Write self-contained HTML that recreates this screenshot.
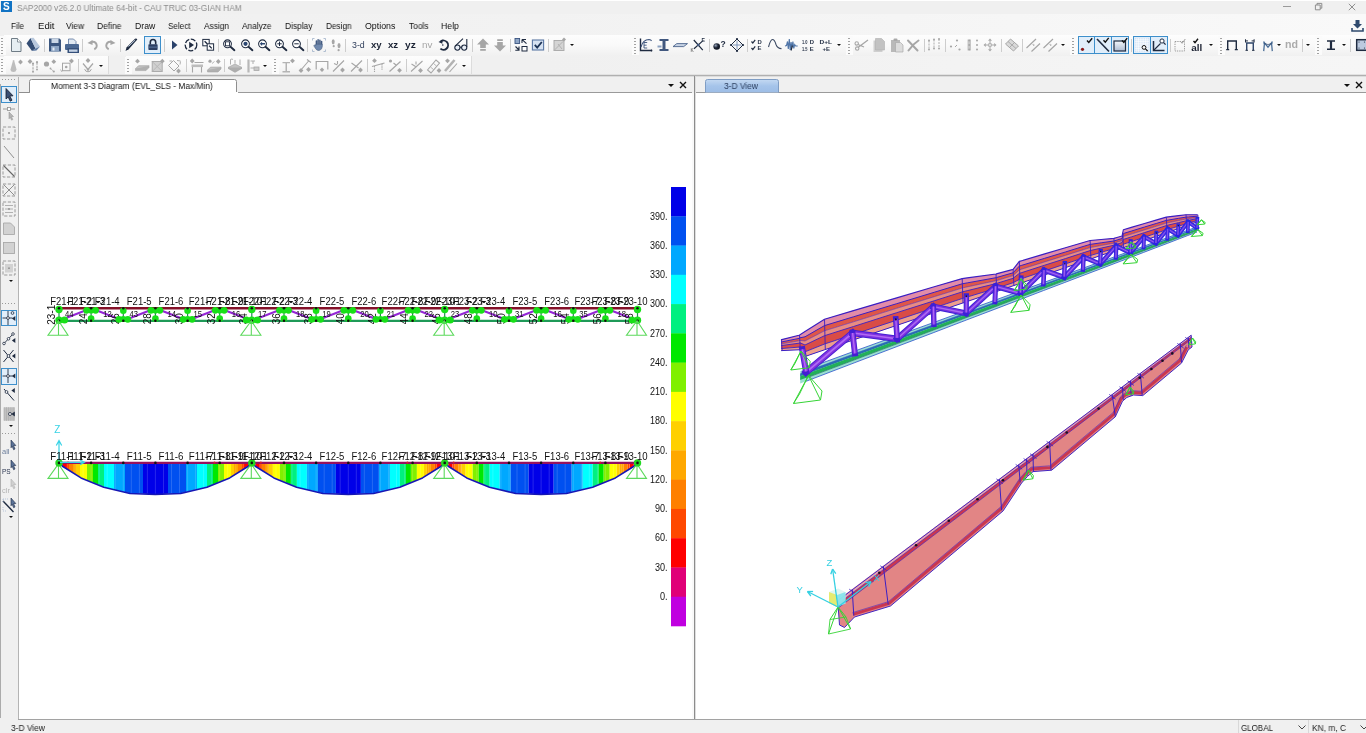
<!DOCTYPE html>
<html><head><meta charset="utf-8"><title>SAP2000</title>
<style>
html,body{margin:0;padding:0;}
body{width:1366px;height:733px;overflow:hidden;background:#f0f0f0;position:relative;font-family:"Liberation Sans",sans-serif;font-size:12px;color:#111;}
.abs{position:absolute;}
.t{position:absolute;white-space:nowrap;transform-origin:0 50%;line-height:14px;will-change:transform;}
.sep{position:absolute;width:1px;background:#cdcdcd;height:13px;}
.grip{position:absolute;width:3px;height:18px;background-image:repeating-linear-gradient(to bottom,#a2a2a2 0,#a2a2a2 1px,transparent 1px,transparent 3px);background-size:2px 3px;background-repeat:repeat-y;background-position:0 0;}
.gripw{position:absolute;width:7px;height:21px;background:#fbfbfb;}
.dd{position:absolute;width:0;height:0;border-left:2.4px solid transparent;border-right:2.4px solid transparent;border-top:2.6px solid #111;}
svg{position:absolute;overflow:visible;will-change:transform;}
.lbl{font-family:"Liberation Sans",sans-serif;font-size:10px;fill:#111;}
.lbls{font-family:"Liberation Sans",sans-serif;font-size:9px;fill:#111;}
</style></head><body>

<div class="abs" style="left:0;top:0;width:1366px;height:1px;background:#fff"></div>
<div class="abs" style="left:0;top:14px;width:1366px;height:21px;background:linear-gradient(to right,#f0f0f0 0%,#f2f2f2 40%,#f9f9f9 100%)"></div>
<div class="abs" style="left:0;top:56px;width:1366px;height:18px;background:linear-gradient(to right,#f0f0f0 0%,#f0f0f0 40%,#f6f6f6 100%)"></div>
<div class="abs" style="left:1px;top:1px;width:11px;height:11px;background:#1173c4"></div>
<div class="t" style="left:3.2px;top:0px;font-size:10px;font-weight:bold;color:#fff;line-height:13px">S</div>
<div class="t" style="left:17px;top:0.5px;font-size:8.7px;color:#8c8c8c;transform:scaleX(0.950);">SAP2000 v26.2.0 Ultimate 64-bit - CAU TRUC 03-GIAN HAM</div>
<div class="abs" style="left:1283px;top:6px;width:7.5px;height:1px;background:#9a9a9a"></div>
<svg style="left:1315px;top:2.5px" width="8" height="8" viewBox="0 0 10 10"><path d="M0.5 2.5h6v6h-6z M2.5 2.5v-2h6v6h-2" fill="none" stroke="#8a8a8a" stroke-width="1.2"/></svg>
<svg style="left:1347.5px;top:2.5px" width="8" height="8" viewBox="0 0 10 10"><path d="M1 1l8 8M9 1l-8 8" fill="none" stroke="#8a8a8a" stroke-width="1.2"/></svg>
<svg style="left:1351px;top:19px" width="13" height="13" viewBox="0 0 13 13"><path d="M4.5 1h4v4h2.5l-4.5 4.5L2 5h2.5z" fill="#2f4a6e"/><path d="M1 9v3h11v-3" fill="none" stroke="#2f4a6e" stroke-width="1.6"/></svg>
<div class="t" style="left:11px;top:18.5px;font-size:8.7px;color:#111;transform:scaleX(0.927);">File</div>
<div class="t" style="left:37.5px;top:18.5px;font-size:8.7px;color:#111;transform:scaleX(1.101);">Edit</div>
<div class="t" style="left:65.5px;top:18.5px;font-size:8.7px;color:#111;transform:scaleX(0.963);">View</div>
<div class="t" style="left:97px;top:18.5px;font-size:8.7px;color:#111;transform:scaleX(0.974);">Define</div>
<div class="t" style="left:134.5px;top:18.5px;font-size:8.7px;color:#111;transform:scaleX(0.985);">Draw</div>
<div class="t" style="left:167.5px;top:18.5px;font-size:8.7px;color:#111;transform:scaleX(0.931);">Select</div>
<div class="t" style="left:203.5px;top:18.5px;font-size:8.7px;color:#111;transform:scaleX(0.957);">Assign</div>
<div class="t" style="left:242px;top:18.5px;font-size:8.7px;color:#111;transform:scaleX(0.953);">Analyze</div>
<div class="t" style="left:284.5px;top:18.5px;font-size:8.7px;color:#111;transform:scaleX(0.964);">Display</div>
<div class="t" style="left:325.5px;top:18.5px;font-size:8.7px;color:#111;transform:scaleX(0.942);">Design</div>
<div class="t" style="left:364.5px;top:18.5px;font-size:8.7px;color:#111;transform:scaleX(1.017);">Options</div>
<div class="t" style="left:408.5px;top:18.5px;font-size:8.7px;color:#111;transform:scaleX(0.960);">Tools</div>
<div class="t" style="left:441px;top:18.5px;font-size:8.7px;color:#111;transform:scaleX(1.006);">Help</div>
<div class="abs" style="left:4px;top:35px;width:1362px;height:21px;background:linear-gradient(to bottom,#fdfdfd 0%,#f9f9f9 50%,#f0f0f0 100%)"></div>
<div class="abs" style="left:4px;top:56px;width:104px;height:19px;background:linear-gradient(to bottom,#fdfdfd 0%,#f9f9f9 50%,#f0f0f0 100%);border-right:1px solid #dcdcdc"></div>
<div class="abs" style="left:126px;top:56px;width:345px;height:19px;background:linear-gradient(to bottom,#fdfdfd 0%,#f9f9f9 50%,#f0f0f0 100%);border-right:1px solid #dcdcdc"></div>
<div class="gripw" style="left:-1px;top:36px;height:19px"></div>
<div class="grip" style="left:1px;top:38px;height:16px"></div>
<div class="gripw" style="left:632px;top:36px;height:19px"></div>
<div class="grip" style="left:634px;top:38px;height:16px"></div>
<div class="gripw" style="left:846px;top:36px;height:19px"></div>
<div class="grip" style="left:848px;top:38px;height:16px"></div>
<div class="gripw" style="left:1070px;top:36px;height:19px"></div>
<div class="grip" style="left:1072px;top:38px;height:16px"></div>
<div class="gripw" style="left:1217.5px;top:36px;height:19px"></div>
<div class="grip" style="left:1219.5px;top:38px;height:16px"></div>
<div class="gripw" style="left:1314.5px;top:36px;height:19px"></div>
<div class="grip" style="left:1316.5px;top:38px;height:16px"></div>
<div class="gripw" style="left:-1px;top:57px;height:19px"></div>
<div class="grip" style="left:1px;top:59px;height:16px"></div>
<div class="gripw" style="left:125px;top:57px;height:19px"></div>
<div class="grip" style="left:127px;top:59px;height:16px"></div>
<div class="gripw" style="left:272px;top:57px;height:19px"></div>
<div class="grip" style="left:274px;top:59px;height:16px"></div>
<div class="abs" style="left:0;top:74px;width:1366px;height:1px;background:#e2e2e2"></div>
<div class="abs" style="left:0;top:75px;width:1366px;height:1px;background:#b0b0b0"></div>
<div class="abs" style="left:0;top:76px;width:1366px;height:1px;background:#dcdcdc"></div>
<div class="abs" style="left:0;top:77px;width:18px;height:642px;background:#f0f0f0"></div>
<div class="abs" style="left:18px;top:77px;width:1px;height:642px;background:#b4b4b4"></div>
<div class="abs" style="left:0;top:84px;width:1px;height:634px;background:#ababab"></div>
<div class="abs" style="left:19px;top:93px;width:673px;height:626px;background:#fff"></div>
<div class="abs" style="left:19px;top:92px;width:673px;height:1px;background:#9a9a9a"></div>
<svg style="left:19px;top:77px" width="230" height="17" viewBox="0 0 230 17"><path d="M0 15.5H10.5V4.5Q10.5 2.5 12.5 2.5H215.5Q217.5 2.5 217.5 4.5V15.5" fill="#fff" stroke="#8e8e8e" stroke-width="1"/><rect x="11" y="15" width="208" height="2" fill="#fff"/></svg>
<div class="t" style="left:51px;top:78.5px;font-size:8.7px;color:#111;transform:scaleX(0.963);">Moment 3-3 Diagram (EVL_SLS - Max/Min)</div>
<div class="dd" style="left:668px;top:84px;border-left-width:3.5px;border-right-width:3.5px;border-top-width:3.5px"></div>
<svg style="left:679px;top:81px" width="8" height="8" viewBox="0 0 8 8"><path d="M1 1l6 6M7 1l-6 6" stroke="#111" stroke-width="1.4" fill="none"/></svg>
<div class="abs" style="left:692px;top:93px;width:2px;height:626px;background:#f9f9f9"></div>
<div class="abs" style="left:694px;top:76px;width:1px;height:643px;background:#8c8c8c"></div>
<div class="abs" style="left:695px;top:76px;width:1px;height:643px;background:#dedede"></div>
<div class="abs" style="left:696px;top:93px;width:670px;height:626px;background:#fff"></div>
<div class="abs" style="left:696px;top:92px;width:670px;height:1px;background:#9a9a9a"></div>
<svg style="left:697px;top:77px" width="100" height="17" viewBox="0 0 100 17"><defs><linearGradient id="tg" x1="0" y1="0" x2="0" y2="1"><stop offset="0" stop-color="#c4d9f2"/><stop offset="0.5" stop-color="#a5c4ea"/><stop offset="1" stop-color="#9dbde6"/></linearGradient></defs><path d="M8.5 15.5V4.5Q8.5 2.5 10.5 2.5H79.5Q81.5 2.5 81.5 4.5V15.5" fill="url(#tg)" stroke="#7f9dc4" stroke-width="1"/></svg>
<div class="t" style="left:724px;top:78.5px;font-size:8.7px;color:#2c3e5e;transform:scaleX(0.968);">3-D View</div>
<div class="dd" style="left:1344px;top:84px;border-left-width:3.5px;border-right-width:3.5px;border-top-width:3.5px"></div>
<svg style="left:1355px;top:81px" width="8" height="8" viewBox="0 0 8 8"><path d="M1 1l6 6M7 1l-6 6" stroke="#111" stroke-width="1.4" fill="none"/></svg>
<div class="abs" style="left:0;top:719px;width:1366px;height:1px;background:#f0f0f0"></div><div class="abs" style="left:18px;top:719px;width:1348px;height:1px;background:#a2a2a2"></div>
<div class="abs" style="left:0;top:720px;width:1366px;height:13px;background:#f0f0f0"></div>
<div class="t" style="left:11px;top:720.8px;font-size:8.7px;color:#222;transform:scaleX(0.968);">3-D View</div>
<div class="abs" style="left:1238px;top:720px;width:1px;height:13px;background:#d8d8d8"></div>
<div class="abs" style="left:1308px;top:720px;width:1px;height:13px;background:#d8d8d8"></div>
<div class="t" style="left:1241px;top:720.8px;font-size:8.7px;color:#222;transform:scaleX(0.919);">GLOBAL</div>
<div class="t" style="left:1312px;top:720.8px;font-size:8.7px;color:#222;transform:scaleX(0.964);">KN, m, C</div>
<svg style="left:1298px;top:725px" width="8" height="5" viewBox="0 0 8 5"><path d="M0.5 0.5l3.5 3.5l3.5-3.5" stroke="#444" fill="none"/></svg>
<svg style="left:1360px;top:725px" width="8" height="5" viewBox="0 0 8 5"><path d="M0.5 0.5l3.5 3.5l3.5-3.5" stroke="#444" fill="none"/></svg>
<svg style="left:8px;top:37px" width="16" height="16" viewBox="-8 -8 16 16"><path d="M-4.5 -6.5h6l3.5 3.5v9.5h-9.5z" fill="#e6eef2" stroke="#6f7c86" stroke-width="1"/><path d="M1.5 -6.5v3.5h3.5" fill="#fff" stroke="#6f7c86" stroke-width="0.8"/></svg>
<svg style="left:24.5px;top:37px" width="16" height="16" viewBox="-8 -8 16 16"><path d="M-6.5 -1.5L-2.5 -7L2.5 3.5L-1 6z" fill="#344d73"/><path d="M-2.5 -7L0.5 -7.2L7 1.5L2.5 3.5z" fill="#b7c7dc"/><path d="M2.5 3.5L7 1.5L3.5 5.5L-1 6z" fill="#5e7ba3"/></svg>
<div class="sep" style="left:43.5px;top:38.5px;height:13px"></div>
<svg style="left:47px;top:37px" width="16" height="16" viewBox="-8 -8 16 16"><path d="M-6 -6.5h10.5l1.5 1.5v11.5h-12z" fill="#3b567f"/><rect x="-3.5" y="-6.5" width="7" height="4.5" fill="#c9d6e6"/><rect x="-4" y="1" width="8" height="5.5" fill="#8da5c4"/><rect x="-2.5" y="2.5" width="2" height="3" fill="#e6edf5"/></svg>
<svg style="left:63.5px;top:37.5px" width="16" height="16" viewBox="-8 -8 16 16"><path d="M-3.5 -7h5l2.5 2.5v3h-7.5z" fill="#dfe8f2" stroke="#5a759c" stroke-width="0.8"/><rect x="-7" y="-2" width="14" height="6" rx="1" fill="#4a6893"/><rect x="-4.5" y="2" width="11.5" height="5" fill="#35507a"/><rect x="-3" y="3.5" width="8.5" height="2.3" fill="#c5d3e5"/></svg>
<div class="sep" style="left:81.5px;top:38.5px;height:13px"></div>
<svg style="left:84.5px;top:37px" width="16" height="16" viewBox="-8 -8 16 16"><g transform="scale(0.85)"><path d="M-2 -3.5A4.3 4.3 0 1 1 1.5 5" fill="none" stroke="#a6a6a6" stroke-width="2.4"/><path d="M-6.5 -2.5L-0.5 -6v6z" fill="#a6a6a6"/></g></svg>
<svg style="left:101.5px;top:37px" width="16" height="16" viewBox="-8 -8 16 16"><g transform="scale(0.85)"><path d="M2 -3.5A4.3 4.3 0 1 0 -1.5 5" fill="none" stroke="#a6a6a6" stroke-width="2.4"/><path d="M6.5 -2.5L0.5 -6v6z" fill="#a6a6a6"/></g></svg>
<div class="sep" style="left:120px;top:38.5px;height:13px"></div>
<svg style="left:123px;top:37px" width="16" height="16" viewBox="-8 -8 16 16"><path d="M-5.5 6L-4.5 2.5L4 -6.2Q5.5 -7 6.3 -5.5L-2.3 4.2z" fill="#1f2b40"/><path d="M-2.5 1.5L4.2 -5" stroke="#b9c8dc" stroke-width="1"/></svg>
<div class="abs" style="left:144px;top:36px;width:17px;height:17.5px;box-sizing:border-box;border:1px solid #3d8fcb;background:#e1eefa"></div>
<svg style="left:144.5px;top:37px" width="16" height="16" viewBox="-8 -8 16 16"><path d="M-2.7 -0.5v-2.3a2.7 2.7 0 0 1 5.4 0v2.3" fill="none" stroke="#1f2b40" stroke-width="1.6"/><rect x="-4.6" y="-0.8" width="9.2" height="5.8" rx="0.7" fill="#2b3f63"/><rect x="-4.6" y="1.6" width="9.2" height="1" fill="#5b769f"/></svg>
<div class="sep" style="left:163.5px;top:38.5px;height:13px"></div>
<svg style="left:165.5px;top:37px" width="16" height="16" viewBox="-8 -8 16 16"><path d="M-2 -4.5L3.5 0L-2 4.5z" fill="#2a426b"/></svg>
<svg style="left:183px;top:37px" width="16" height="16" viewBox="-8 -8 16 16"><circle cx="0" cy="0" r="5.8" fill="none" stroke="#1f2b40" stroke-width="1.3" stroke-dasharray="5 1.6"/><path d="M-1.8 -3.2L3 0L-1.8 3.2z" fill="#1f2b40"/></svg>
<svg style="left:200px;top:37px" width="16" height="16" viewBox="-8 -8 16 16"><rect x="-5.2" y="-5.6" width="6.4" height="6.4" fill="#fff" stroke="#1f2b40" stroke-width="1"/><rect x="-0.8" y="-1.2" width="6.4" height="6.4" fill="#fff" stroke="#1f2b40" stroke-width="1"/><path d="M-3.4 -3.8l2.6 2.6M1.2 0.8l2.6 2.6" stroke="#1f2b40" stroke-width="1.3"/></svg>
<div class="sep" style="left:217.5px;top:38.5px;height:13px"></div>
<svg style="left:221px;top:37px" width="16" height="16" viewBox="-8 -8 16 16"><circle cx="-1.5" cy="-1.2" r="3.9" fill="#fff" stroke="#1f2b40" stroke-width="1.05"/><path d="M1.5 1.8L5.4 5.2" stroke="#1f2b40" stroke-width="1.9" stroke-linecap="round"/><rect x="-3.5" y="-3.2" width="4" height="4" fill="#fff" stroke="#1f2b40" stroke-width="0.9"/></svg>
<svg style="left:238.5px;top:37px" width="16" height="16" viewBox="-8 -8 16 16"><circle cx="-1.5" cy="-1.2" r="3.9" fill="#fff" stroke="#1f2b40" stroke-width="1.05"/><path d="M1.5 1.8L5.4 5.2" stroke="#1f2b40" stroke-width="1.9" stroke-linecap="round"/><circle cx="-1.5" cy="-1.2" r="2.1" fill="#2b4670"/></svg>
<svg style="left:255.5px;top:37px" width="16" height="16" viewBox="-8 -8 16 16"><circle cx="-1.5" cy="-1.2" r="3.9" fill="#fff" stroke="#1f2b40" stroke-width="1.05"/><path d="M1.5 1.8L5.4 5.2" stroke="#1f2b40" stroke-width="1.9" stroke-linecap="round"/><path d="M-4.2 -1.2l2.3 -2.1v1.4h2.9v1.4h-2.9v1.4z" fill="#2b4670"/></svg>
<svg style="left:272.5px;top:37px" width="16" height="16" viewBox="-8 -8 16 16"><circle cx="-1.5" cy="-1.2" r="3.9" fill="#fff" stroke="#1f2b40" stroke-width="1.05"/><path d="M1.5 1.8L5.4 5.2" stroke="#1f2b40" stroke-width="1.9" stroke-linecap="round"/><path d="M-3.7 -1.2h4.4M-1.5 -3.4v4.4" stroke="#1f2b40" stroke-width="1"/></svg>
<svg style="left:290px;top:37px" width="16" height="16" viewBox="-8 -8 16 16"><circle cx="-1.5" cy="-1.2" r="3.9" fill="#fff" stroke="#1f2b40" stroke-width="1.05"/><path d="M1.5 1.8L5.4 5.2" stroke="#1f2b40" stroke-width="1.9" stroke-linecap="round"/><path d="M-3.7 -1.2h4.4" stroke="#1f2b40" stroke-width="1"/></svg>
<div class="sep" style="left:307px;top:38.5px;height:13px"></div>
<svg style="left:310.5px;top:37px" width="16" height="16" viewBox="-8 -8 16 16"><path d="M-6.5 -4.5v-2h2M4.5 -6.5h2v2M6.5 4.5v2h-2M-4.5 6.5h-2v-2" fill="none" stroke="#9eb0c8" stroke-width="0.8"/><path d="M-2.6 0V-4M-0.9 -0.5V-5.2M0.9 -0.5V-4.8M2.6 0V-3.4" stroke="#435b82" stroke-width="1.5" stroke-linecap="round"/><path d="M-3.3 -0.8h6.6v2.6q-0.4 3 -3 3.6h-1.4q-1.6 -0.4 -2.6 -2.2l-1.6 -2.6q0.6 -1 1.6 -0.2l0.4 0.6z" fill="#7089ae" stroke="#3f5679" stroke-width="0.5"/></svg>
<svg style="left:328px;top:37px" width="16" height="16" viewBox="-8 -8 16 16"><ellipse cx="-2.8" cy="-3.2" rx="1.5" ry="2.6" fill="#a6a6a6"/><circle cx="-2.3" cy="1.2" r="1.1" fill="#a6a6a6"/><ellipse cx="3" cy="0.6" rx="1.5" ry="2.6" fill="#a6a6a6"/><circle cx="2.6" cy="5.2" r="1.1" fill="#a6a6a6"/></svg>
<div class="sep" style="left:345px;top:38.5px;height:13px"></div>
<div class="t" style="left:351.85px;top:37.7px;font-size:8.8px;color:#2f3e5b;transform:scaleX(0.967);">3-d</div>
<div class="t" style="left:370.65px;top:37.5px;font-size:9.6px;color:#1a2233;transform:scaleX(0.965);font-weight:bold;">xy</div>
<div class="t" style="left:387.9px;top:37.5px;font-size:9.6px;color:#1a2233;transform:scaleX(1.006);font-weight:bold;">xz</div>
<div class="t" style="left:404.6px;top:37.5px;font-size:9.6px;color:#1a2233;transform:scaleX(1.065);font-weight:bold;">yz</div>
<div class="t" style="left:421.8px;top:37.5px;font-size:9.4px;color:#a6a6a6;transform:scaleX(1.048);">nv</div>
<svg style="left:435.5px;top:37px" width="16" height="16" viewBox="-8 -8 16 16"><path d="M-3.2 -3.6A4.6 4.6 0 1 1 -3.6 3.6" fill="none" stroke="#1f2b40" stroke-width="1.9"/><path d="M-5.5 -3l4.2 -2.4l-0.4 4.2z" fill="#1f2b40"/><circle cx="-1.2" cy="0" r="0.8" fill="#1f2b40"/></svg>
<svg style="left:452.5px;top:37px" width="16" height="16" viewBox="-8 -8 16 16"><circle cx="-3.6" cy="2.6" r="2.6" fill="#e8eef6" stroke="#1f2b40" stroke-width="1.1"/><circle cx="3.2" cy="2.6" r="2.6" fill="#e8eef6" stroke="#1f2b40" stroke-width="1.1"/><path d="M-1 2.2h1.6M-5.6 0.8L2 -6.3M5.8 2V-6" fill="none" stroke="#1f2b40" stroke-width="1.1"/></svg>
<div class="sep" style="left:471.5px;top:38.5px;height:13px"></div>
<svg style="left:474.5px;top:37px" width="16" height="16" viewBox="-8 -8 16 16"><path d="M0 -6.5L6 -0.5H2.8V3h-5.6v-3.5H-6z" fill="#a6a6a6"/><rect x="-2.8" y="4" width="5.6" height="1.8" fill="#a6a6a6"/></svg>
<svg style="left:491.5px;top:37px" width="16" height="16" viewBox="-8 -8 16 16"><path d="M0 6.5L6 0.5H2.8V-3h-5.6v3.5H-6z" fill="#a6a6a6"/><rect x="-2.8" y="-5.8" width="5.6" height="1.8" fill="#a6a6a6"/></svg>
<div class="sep" style="left:509.5px;top:38.5px;height:13px"></div>
<svg style="left:512.5px;top:37px" width="16" height="16" viewBox="-8 -8 16 16"><rect x="-6" y="-6.5" width="4.6" height="5" fill="#8fa6c6" stroke="#3a5480" stroke-width="0.9"/><path d="M1 -5.5h4M1 -5.5v3.5M1.2 -5.3l4.3 4" stroke="#1f2b40" stroke-width="1.1" fill="none"/><rect x="1" y="1.5" width="5" height="4.5" fill="#fff" stroke="#1f2b40" stroke-width="1"/><path d="M-5.5 1.5l3.5 3.5M-2 1.5v3.7h-3.7" stroke="#1f2b40" stroke-width="1.1" fill="none"/></svg>
<svg style="left:529.5px;top:37px" width="16" height="16" viewBox="-8 -8 16 16"><rect x="-5.6" y="-5" width="11.2" height="10" fill="#d6e2f2" stroke="#5b78a4" stroke-width="1.1"/><path d="M-3.2 -0.2L-0.8 2.6L3.8 -3" fill="none" stroke="#1d3457" stroke-width="1.8"/></svg>
<div class="sep" style="left:547.5px;top:38.5px;height:13px"></div>
<svg style="left:551.5px;top:37px" width="16" height="16" viewBox="-8 -8 16 16"><rect x="-6" y="-4.5" width="10" height="10" fill="#d4d4d4" stroke="#a6a6a6" stroke-width="0.9"/><path d="M-6 5.5L3 -3.5M-2 -1l4 5" stroke="#b2b2b2" stroke-width="1"/><path d="M4 -7.5l2 2l-2 2l-2 -2z" fill="#a6a6a6"/></svg>
<div class="dd" style="left:570.1px;top:44.2px;border-top-color:#111"></div>
<svg style="left:638px;top:37px" width="16" height="16" viewBox="-8 -8 16 16"><path d="M-5.5 -6.5V5.5H6" fill="none" stroke="#1f2b40" stroke-width="1.4"/><path d="M-5 2Q-3 -5.5 3 -5.5Q5 -5.3 5.5 -4" fill="none" stroke="#3b527a" stroke-width="1.1"/><path d="M-2 -2.5v5.5M-2 -2.5h3.2M-2 0.2h2.6M-2 3h3.2" stroke="#3b527a" stroke-width="0.9" fill="none"/><circle cx="5.5" cy="5.5" r="0.9" fill="#1f2b40"/></svg>
<svg style="left:655.5px;top:37px" width="16" height="16" viewBox="-8 -8 16 16"><path d="M-4.5 -6h9v2h-3v8h3v2h-9v-2h3v-8h-3z" fill="#41587f"/><path d="M-6.5 1.5h4" stroke="#8aa0c0" stroke-width="2"/></svg>
<svg style="left:672px;top:37px" width="16" height="16" viewBox="-8 -8 16 16"><path d="M-7 1.6L-3.2 -1.4H7.5L3.7 1.6z" fill="#c7d3e4" stroke="#4c648c" stroke-width="0.9"/></svg>
<svg style="left:689.5px;top:37px" width="16" height="16" viewBox="-8 -8 16 16"><path d="M-4.2 -5L4.8 5.2M4.2 -3.6L-4 3.8" stroke="#1f2b40" stroke-width="1.2"/><circle cx="0.3" cy="0" r="1.3" fill="#41587f"/><text x="3.6" y="-2.6" font-family="Liberation Sans,sans-serif" font-size="5.2" font-weight="bold" fill="#1f2b40">E</text><text x="-7.6" y="7" font-family="Liberation Sans,sans-serif" font-size="4.8" fill="#444">K</text></svg>
<div class="sep" style="left:708.5px;top:38.5px;height:13px"></div>
<svg style="left:711px;top:37px" width="16" height="16" viewBox="-8 -8 16 16"><defs><radialGradient id="bg1" cx="0.35" cy="0.35" r="0.7"><stop offset="0" stop-color="#9aa7bd"/><stop offset="0.5" stop-color="#1c2434"/><stop offset="1" stop-color="#0d121d"/></radialGradient></defs><circle cx="-2.3" cy="1.5" r="3.3" fill="url(#bg1)"/><text x="1.4" y="1.8" font-family="Liberation Sans,sans-serif" font-size="8.5" font-weight="bold" fill="#1f2b40">?</text></svg>
<svg style="left:728.5px;top:37px" width="16" height="16" viewBox="-8 -8 16 16"><path d="M0 -6L6 0L0 6L-6 0z" fill="none" stroke="#1f2b40" stroke-width="1"/><path d="M0 -4.5v9M-4.5 0h9" stroke="#6f8bb3" stroke-width="0.9"/><circle cx="0" cy="-6" r="1.1" fill="#1f2b40"/><circle cx="6" cy="0" r="1.1" fill="#1f2b40"/><circle cx="0" cy="6" r="1.1" fill="#1f2b40"/><circle cx="-6" cy="0" r="1.1" fill="#1f2b40"/></svg>
<div class="sep" style="left:747px;top:38.5px;height:13px"></div>
<svg style="left:749px;top:37px" width="16" height="16" viewBox="-8 -8 16 16"><path d="M-5.5 -3.5l1.3 1.5l2.4 -3.2M-5.5 3l1.3 1.5l2.4 -3.2" fill="none" stroke="#1f2b40" stroke-width="1.2"/><text x="0.5" y="-1.2" font-family="Liberation Sans,sans-serif" font-weight="bold" font-size="5.9" fill="#1f2b40">D</text><text x="0.5" y="5.4" font-family="Liberation Sans,sans-serif" font-weight="bold" font-size="5.9" fill="#1f2b40">E</text></svg>
<svg style="left:766.5px;top:37px" width="16" height="16" viewBox="-8 -8 16 16"><path d="M-6.5 2Q-4.5 -5.5 -2.5 -5.5Q-0.5 -5.5 1 -0.5Q2.5 3.6 6.5 3.6" fill="none" stroke="#3c4a63" stroke-width="1.1"/></svg>
<svg style="left:784px;top:37px" width="16" height="16" viewBox="-8 -8 16 16"><path d="M-7 1l1.5 -0.5l1 -4l0.8 7.5l1 -10l0.9 11l0.9 -8l0.8 5.5l1 -6l0.9 7l0.9 -4l1 1.5h2" fill="none" stroke="#4f75a8" stroke-width="1.1"/><path d="M-1 5.5l1.4 -5" stroke="#1f2b40" stroke-width="1.2"/></svg>
<svg style="left:800.5px;top:37px" width="16" height="16" viewBox="-8 -8 16 16"><text x="-7" y="-1" font-family="Liberation Sans,sans-serif" font-weight="bold" font-size="5.9" fill="#1f2b40" textLength="5.5" lengthAdjust="spacingAndGlyphs">1.0</text><text x="0.8" y="-1" font-family="Liberation Sans,sans-serif" font-weight="bold" font-size="5.9" fill="#1f2b40">D</text><text x="-7" y="5.6" font-family="Liberation Sans,sans-serif" font-weight="bold" font-size="5.9" fill="#1f2b40" textLength="5.5" lengthAdjust="spacingAndGlyphs">1.5</text><text x="0.8" y="5.6" font-family="Liberation Sans,sans-serif" font-weight="bold" font-size="5.9" fill="#1f2b40">E</text></svg>
<svg style="left:818px;top:37px" width="16" height="16" viewBox="-8 -8 16 16"><text x="-6.5" y="-1" font-family="Liberation Sans,sans-serif" font-weight="bold" font-size="5.9" fill="#1f2b40" textLength="12.5" lengthAdjust="spacingAndGlyphs">D+L</text><text x="-3.5" y="5.6" font-family="Liberation Sans,sans-serif" font-weight="bold" font-size="5.9" fill="#1f2b40" textLength="7.5" lengthAdjust="spacingAndGlyphs">+E</text></svg>
<div class="dd" style="left:837.1px;top:44.2px;border-top-color:#111"></div>
<svg style="left:853px;top:37px" width="16" height="16" viewBox="-8 -8 16 16"><path d="M-3 2.5L7 -5M-3 -0.5L3 2" stroke="#a6a6a6" stroke-width="1.3"/><circle cx="-4.3" cy="-1.6" r="1.7" fill="none" stroke="#a6a6a6" stroke-width="1.1"/><circle cx="-3.8" cy="3.6" r="1.7" fill="none" stroke="#a6a6a6" stroke-width="1.1"/></svg>
<svg style="left:870.5px;top:37px" width="16" height="16" viewBox="-8 -8 16 16"><path d="M-5.5 -4.5h6l3 3v8.5h-9z" fill="#cfcfcf"/><path d="M-3.5 -6.5h6l3 3v8.5h-9z" fill="#c2c2c2" stroke="#b0b0b0" stroke-width="0.6"/></svg>
<svg style="left:888.5px;top:37px" width="16" height="16" viewBox="-8 -8 16 16"><path d="M-6 -5h9v12h-9z" fill="#b9b9b9"/><rect x="-3.5" y="-6.5" width="4" height="2.5" rx="1" fill="#a9a9a9"/><path d="M-1.5 -2.5h5l2.5 2.5v7h-7.5z" fill="#dcdcdc" stroke="#aaa" stroke-width="0.7"/></svg>
<svg style="left:905px;top:37px" width="16" height="16" viewBox="-8 -8 16 16"><path d="M-5 -4.5L4.5 5.5M5.5 -4.5Q0 -1 -4.5 5.5" stroke="#a6a6a6" stroke-width="2" fill="none" stroke-linecap="round"/></svg>
<div class="sep" style="left:923.5px;top:38.5px;height:13px"></div>
<svg style="left:926px;top:37px" width="16" height="16" viewBox="-8 -8 16 16"><path d="M-5 -4.5v9M0 -5.5v9M5 -6v9.5" stroke="#a6a6a6" stroke-width="0.9" stroke-dasharray="2 1"/><circle cx="-5" cy="-4.5" r="1" fill="#a6a6a6"/><circle cx="-5" cy="4.5" r="1" fill="#a6a6a6"/><circle cx="0" cy="-5.5" r="1" fill="#a6a6a6"/><circle cx="0" cy="3.5" r="1" fill="#a6a6a6"/><circle cx="5" cy="-6" r="1" fill="#a6a6a6"/><circle cx="5" cy="3.5" r="1" fill="#a6a6a6"/></svg>
<div class="sep" style="left:945px;top:38.5px;height:13px"></div>
<svg style="left:948px;top:37px" width="16" height="16" viewBox="-8 -8 16 16"><circle cx="-5" cy="1.5" r="1.1" fill="#a6a6a6"/><circle cx="1" cy="-4.5" r="1.1" fill="#a6a6a6"/><circle cx="3.5" cy="4.5" r="1.1" fill="#a6a6a6"/><path d="M-1 2l2 -2" stroke="#a6a6a6" stroke-width="1"/></svg>
<svg style="left:965px;top:37px" width="16" height="16" viewBox="-8 -8 16 16"><rect x="-5.5" y="-5.5" width="3.5" height="11" fill="#c6c6c6"/><circle cx="-3.8" cy="-4.5" r="1" fill="#a6a6a6"/><circle cx="-3.8" cy="0" r="1" fill="#a6a6a6"/><circle cx="-3.8" cy="4.5" r="1" fill="#a6a6a6"/><circle cx="4" cy="-4.5" r="1" fill="#a6a6a6"/><circle cx="4" cy="0" r="1" fill="#a6a6a6"/><circle cx="4" cy="4.5" r="1" fill="#a6a6a6"/></svg>
<svg style="left:982px;top:37px" width="16" height="16" viewBox="-8 -8 16 16"><path d="M0 -6.5l2 2.3h-4zM0 6.5l2 -2.3h-4zM-6.5 0l2.3 -2v4zM6.5 0l-2.3 -2v4z" fill="#a6a6a6"/><path d="M0 -4.5v9M-4.5 0h9" stroke="#a6a6a6" stroke-width="1"/><rect x="-1.3" y="-1.3" width="2.6" height="2.6" fill="#e0e0e0" stroke="#a6a6a6" stroke-width="0.7"/></svg>
<div class="sep" style="left:1001px;top:38.5px;height:13px"></div>
<svg style="left:1003.5px;top:37px" width="16" height="16" viewBox="-8 -8 16 16"><path d="M-1.5 -6L6.5 1L1.5 6L-6.5 -1z" fill="#d9d9d9" stroke="#a6a6a6" stroke-width="1"/><path d="M-4 -3.5L4 3.5M2.5 -2.5L-2.5 2.5" stroke="#a6a6a6" stroke-width="0.9"/></svg>
<div class="sep" style="left:1022px;top:38.5px;height:13px"></div>
<svg style="left:1025px;top:37px" width="16" height="16" viewBox="-8 -8 16 16"><path d="M-6.5 3L3 -6M-1.5 6.5L7 -1.5" stroke="#a6a6a6" stroke-width="1.2"/><path d="M-0.5 -0.5l1.5 1.2l-0.3 -1.8" fill="none" stroke="#a6a6a6" stroke-width="0.8"/></svg>
<svg style="left:1042px;top:37px" width="16" height="16" viewBox="-8 -8 16 16"><path d="M-6.5 3L3 -6M-1.5 6.5L7 -1.5" stroke="#a6a6a6" stroke-width="1.2"/><path d="M-0.5 -0.5l1.5 1.2l-0.3 -1.8" fill="none" stroke="#a6a6a6" stroke-width="0.8"/></svg>
<div class="dd" style="left:1061.1px;top:44.2px;border-top-color:#111"></div>
<div class="abs" style="left:1077.5px;top:36px;width:17.5px;height:18px;box-sizing:border-box;border:1px solid #3d8fcb;background:#e1eefa"></div>
<div class="abs" style="left:1094px;top:36px;width:18px;height:18px;box-sizing:border-box;border:1px solid #3d8fcb;background:#e1eefa"></div>
<div class="abs" style="left:1111px;top:36px;width:18px;height:18px;box-sizing:border-box;border:1px solid #3d8fcb;background:#e1eefa"></div>
<svg style="left:1078px;top:37px" width="16" height="16" viewBox="-8 -8 16 16"><circle cx="-3.5" cy="4.3" r="1.6" fill="#8b1a1a"/><path d="M1 -4.5l1.8 2l3.4 -4.3" fill="none" stroke="#111" stroke-width="1.4"/></svg>
<svg style="left:1095px;top:37px" width="16" height="16" viewBox="-8 -8 16 16"><path d="M-6 -6L6 6.5" stroke="#1f2b40" stroke-width="1.6"/><path d="M0.5 -4.8l1.8 2l3.4 -4.3" fill="none" stroke="#111" stroke-width="1.4"/></svg>
<svg style="left:1112px;top:37px" width="16" height="16" viewBox="-8 -8 16 16"><defs><linearGradient id="sq1" x1="0" y1="0" x2="0" y2="1"><stop offset="0" stop-color="#f4f7fb"/><stop offset="1" stop-color="#aebcd2"/></linearGradient></defs><rect x="-6" y="-4" width="11.5" height="10" fill="url(#sq1)" stroke="#1f2b40" stroke-width="1.2"/><path d="M2 -4.6l1.8 2l3.4 -4.3" fill="none" stroke="#111" stroke-width="1.4"/></svg>
<div class="sep" style="left:1131px;top:38.5px;height:13px"></div>
<div class="abs" style="left:1133px;top:36px;width:18px;height:18px;box-sizing:border-box;border:1px solid #3d8fcb;background:#e1eefa"></div>
<div class="abs" style="left:1150px;top:36px;width:18px;height:18px;box-sizing:border-box;border:1px solid #3d8fcb;background:#e1eefa"></div>
<svg style="left:1133.5px;top:37px" width="16" height="16" viewBox="-8 -8 16 16"><rect x="-7" y="-7" width="14" height="14" fill="#d3e3f6"/><path d="M-5.2 -7v14M-7 -5.2h14M-3.5 -7v14M-7 -3.5h14M-1.7 -7v14M-7 -1.7h14M0 -7v14M-7 0h14M1.7 -7v14M-7 1.7h14M3.5 -7v14M-7 3.5h14M5.2 -7v14M-7 5.2h14" stroke="#fff" stroke-width="0.6"/><circle cx="2" cy="2.4" r="1.9" fill="#fff" stroke="#111" stroke-width="1"/><path d="M3.5 3.9l2.2 2.2" stroke="#111" stroke-width="1.3"/></svg>
<svg style="left:1150.5px;top:37px" width="16" height="16" viewBox="-8 -8 16 16"><path d="M-5.5 -4V5.5H5.5" fill="none" stroke="#1f2b40" stroke-width="1.5"/><path d="M-5 5L1.5 -1.5" stroke="#1f2b40" stroke-width="1.1"/><circle cx="3" cy="-4" r="2.1" fill="#fff" stroke="#1f2b40" stroke-width="1"/><path d="M4.6 -2.4l2 2" stroke="#1f2b40" stroke-width="1.3"/></svg>
<div class="sep" style="left:1170px;top:38.5px;height:13px"></div>
<svg style="left:1172px;top:37px" width="16" height="16" viewBox="-8 -8 16 16"><rect x="-5" y="-3.5" width="9.5" height="9.5" fill="none" stroke="#9a9a9a" stroke-width="1" stroke-dasharray="1.3 1"/><path d="M0.5 -3.5l1.6 1.8l3.2 -4.3" fill="none" stroke="#9a9a9a" stroke-width="1"/></svg>
<svg style="left:1188.5px;top:37px" width="16" height="16" viewBox="-8 -8 16 16"><path d="M-3.5 -4l1.5 1.6l3 -3.8" fill="none" stroke="#111" stroke-width="1.4"/><text x="-5.8" y="6.2" font-family="Liberation Sans,sans-serif" font-weight="bold" font-size="9" fill="#1a2030" textLength="11" lengthAdjust="spacingAndGlyphs">all</text></svg>
<div class="dd" style="left:1208.6px;top:44.2px;border-top-color:#111"></div>
<svg style="left:1224px;top:37px" width="16" height="16" viewBox="-8 -8 16 16"><path d="M-4.3 4.5V-4H4.3V4.5" fill="none" stroke="#1f2b40" stroke-width="1.4"/><path d="M-5.8 4.6h3M2.8 4.6h3" stroke="#1f2b40" stroke-width="1.2"/></svg>
<svg style="left:1242px;top:36.5px" width="16" height="16" viewBox="-8 -8 16 16"><g transform="scale(0.82)"><path d="M-4 6.5V-2.5H4V6.5" fill="none" stroke="#2d4468" stroke-width="1.7"/><path d="M-5.5 -7v4M-5.5 -5h3M5 -7v4M5 -5h-3M-5.5 6.5h3M2.5 6.5h3" stroke="#1f2b40" stroke-width="1.2"/></g></svg>
<svg style="left:1260px;top:37.5px" width="16" height="16" viewBox="-8 -8 16 16"><g transform="scale(0.78)"><path d="M-5.5 6.5L-4.5 -4L0 1.5L4.5 -4L5.5 6.5" fill="none" stroke="#466a94" stroke-width="1.6"/><path d="M-5.5 -6v3M5.5 -6v3" stroke="#466a94" stroke-width="1"/><path d="M-4.5 -3.2Q0 -0.5 4.5 -3.2" fill="none" stroke="#2d4468" stroke-width="0.9"/></g></svg>
<div class="dd" style="left:1276.6px;top:44.2px;border-top-color:#111"></div>
<div class="t" style="left:1284.5px;top:38px;font-size:10px;color:#ababab;transform:scaleX(1.064);font-weight:bold;">nd</div>
<div class="sep" style="left:1301.5px;top:38.5px;height:13px"></div>
<div class="dd" style="left:1305.6px;top:44.2px;border-top-color:#111"></div>
<svg style="left:1323px;top:37px" width="16" height="16" viewBox="-8 -8 16 16"><path d="M-4 -4.8h8v1.6h-2.9v6.6h2.9v1.6h-8v-1.6h2.9v-6.6h-2.9z" fill="#1f2b40"/></svg>
<div class="dd" style="left:1341.6px;top:44.2px;border-top-color:#111"></div>
<div class="sep" style="left:1350px;top:38.5px;height:13px"></div>
<svg style="left:1353px;top:37px" width="16" height="16" viewBox="-8 -8 16 16"><rect x="-4.3" y="-5.3" width="11" height="10.6" fill="#bccadf" stroke="#1f2b40" stroke-width="1.5"/><circle cx="-2" cy="-3" r="0.6" fill="#1f2b40"/><circle cx="-2" cy="3" r="0.6" fill="#1f2b40"/><circle cx="3.5" cy="3" r="0.6" fill="#1f2b40"/><circle cx="3.5" cy="-3" r="0.6" fill="#1f2b40"/></svg>
<svg style="left:9px;top:57.5px" width="16" height="16" viewBox="-8 -8 16 16"><path d="M-4 -5.5Q-3.4 -6.5 -2.8 -5.5L-0.5 3.5Q-1 6 -3.4 6Q-6.3 6 -6.5 3.5z" fill="#bdbdbd"/><path d="M3.5 -6.4l2.4 2.4l-2.4 2.4l-2.4 -2.4z" fill="#a6a6a6"/></svg>
<svg style="left:25.5px;top:57.5px" width="16" height="16" viewBox="-8 -8 16 16"><path d="M-4 -6.9l2.4 2.4l-2.4 2.4l-2.4 -2.4z" fill="#a6a6a6"/><path d="M-1 -2v8M3 -3.5v7" stroke="#a6a6a6" stroke-width="1.1" stroke-dasharray="2.2 1"/><circle cx="-1" cy="-2.5" r="1.1" fill="#a6a6a6"/><circle cx="3" cy="-3.8" r="1.1" fill="#a6a6a6"/><circle cx="-1" cy="5.8" r="1" fill="#a6a6a6"/><circle cx="3" cy="3.5" r="1" fill="#a6a6a6"/></svg>
<svg style="left:41.5px;top:57.5px" width="16" height="16" viewBox="-8 -8 16 16"><circle cx="-3.5" cy="-2" r="2.6" fill="#a6a6a6"/><path d="M3.8 -6.7l2.4 2.4l-2.4 2.4l-2.4 -2.4z" fill="#a6a6a6"/><circle cx="0.5" cy="2.5" r="0.9" fill="#a6a6a6"/><circle cx="3.8" cy="5.5" r="1.1" fill="#a6a6a6"/><path d="M0.5 2.5l3 2.8" stroke="#a6a6a6" stroke-width="0.7"/></svg>
<svg style="left:59px;top:57.5px" width="16" height="16" viewBox="-8 -8 16 16"><rect x="-4.5" y="-2.8" width="7.5" height="7.5" fill="none" stroke="#a6a6a6" stroke-width="1"/><circle cx="-0.8" cy="1" r="1.3" fill="#a6a6a6"/><path d="M4.5 -7.4l2.4 2.4l-2.4 2.4l-2.4 -2.4z" fill="#a6a6a6"/><path d="M-6.5 3.5l1.5 2.5M3.5 -4.5l-1 -1.5" stroke="#a6a6a6" stroke-width="0.8"/></svg>
<div class="sep" style="left:78px;top:59px;height:13px"></div>
<svg style="left:80px;top:57.5px" width="16" height="16" viewBox="-8 -8 16 16"><path d="M0 -7.9l2.4 2.4l-2.4 2.4l-2.4 -2.4z" fill="#a6a6a6"/><path d="M-5 -2.5L0 3.5L5 -2.5" fill="none" stroke="#a6a6a6" stroke-width="1.2"/><path d="M-3.3 3.2A3.4 3.4 0 0 0 3.3 3.2" fill="none" stroke="#a6a6a6" stroke-width="1"/><circle cx="0" cy="3.5" r="1.2" fill="#a6a6a6"/></svg>
<div class="dd" style="left:99.1px;top:64.7px;border-top-color:#111"></div>
<svg style="left:133.5px;top:57.5px" width="16" height="16" viewBox="-8 -8 16 16"><path d="M-4.5 -7.2l2.4 2.4l-2.4 2.4l-2.4 -2.4z" fill="#a6a6a6"/><path d="M-6.5 2.8L-3.5 -0.2H7L4 2.8z" fill="#c4c4c4" stroke="#a6a6a6" stroke-width="0.8"/><path d="M-6.5 2.8v1.8H4L7 1.6v-1.8" fill="#b0b0b0" stroke="#a6a6a6" stroke-width="0.6"/></svg>
<svg style="left:150px;top:57.5px" width="16" height="16" viewBox="-8 -8 16 16"><rect x="-5.8" y="-4.5" width="10" height="10" fill="#d0d0d0" stroke="#a6a6a6" stroke-width="0.9"/><path d="M-5.8 -4.5l10 10M4.2 -4.5l-10 10" stroke="#b4b4b4" stroke-width="0.9"/><path d="M4.3 -7.2l2.4 2.4l-2.4 2.4l-2.4 -2.4z" fill="#a6a6a6"/></svg>
<svg style="left:167px;top:57.5px" width="16" height="16" viewBox="-8 -8 16 16"><path d="M-1.5 -5.5L4 0L-1 5L-6.5 -0.5z" fill="none" stroke="#a6a6a6" stroke-width="1"/><path d="M-5.5 -5l2.5 0M2 -5.5l3.5 0.5M5.5 -4.5l-0.5 3" stroke="#a6a6a6" stroke-width="0.9"/><path d="M3.5 2.6l2.4 2.4l-2.4 2.4l-2.4 -2.4z" fill="#a6a6a6"/></svg>
<div class="sep" style="left:185.5px;top:59px;height:13px"></div>
<svg style="left:188.5px;top:57.5px" width="16" height="16" viewBox="-8 -8 16 16"><path d="M-4.8 -7.4l2.4 2.4l-2.4 2.4l-2.4 -2.4z" fill="#a6a6a6"/><path d="M-5.5 -1.5h11.5v2.6h-11.5z" fill="#bcbcbc"/><path d="M-4.5 1v5.5M4.5 1v5.5M-2.5 -3.5h9" stroke="#a6a6a6" stroke-width="1.1"/></svg>
<svg style="left:206px;top:57.5px" width="16" height="16" viewBox="-8 -8 16 16"><circle cx="-4" cy="-4.8" r="1.6" fill="#a6a6a6"/><path d="M4.3 -6.9l2.4 2.4l-2.4 2.4l-2.4 -2.4z" fill="#a6a6a6"/><path d="M-2 -2.5l2.5 -2" stroke="#a6a6a6" stroke-width="0.8"/><path d="M-6.5 4.2L-3.5 1.2H7L4 4.2z" fill="#c4c4c4" stroke="#a6a6a6" stroke-width="0.8"/><path d="M-6.5 4.2v1.8H4L7 3v-1.8" fill="#b0b0b0" stroke="#a6a6a6" stroke-width="0.6"/></svg>
<div class="sep" style="left:223.5px;top:59px;height:13px"></div>
<svg style="left:226.5px;top:57.5px" width="16" height="16" viewBox="-8 -8 16 16"><path d="M-7 1.5L0 -2L7 1.5L0 5.5z" fill="#c2c2c2" stroke="#a6a6a6" stroke-width="0.7"/><path d="M-7 1.5v1.3L0 6.8L7 2.8V1.5" fill="#adadad"/><path d="M-4.5 -6.5v5M0 -6v3.5M5 -6.5v5.5M-4.5 -6.5q1.5 -1 2.5 0" stroke="#a6a6a6" stroke-width="0.9" fill="none"/></svg>
<svg style="left:244.5px;top:57.5px" width="16" height="16" viewBox="-8 -8 16 16"><path d="M-4.5 -6.5v13" stroke="#b8b8b8" stroke-width="2.2"/><path d="M-2.5 -5h4.5M-2.5 2h3.5M0 -5v3" stroke="#a6a6a6" stroke-width="0.9"/><rect x="1" y="1" width="5" height="3.4" fill="#c8c8c8" stroke="#a6a6a6" stroke-width="0.8"/></svg>
<div class="dd" style="left:263.1px;top:64.7px;border-top-color:#111"></div>
<svg style="left:279.5px;top:57.5px" width="16" height="16" viewBox="-8 -8 16 16"><path d="M-5.5 -4h7.5v1.3h-3v7.8h3v1.3h-7.5v-1.3h3v-7.8h-3z" fill="#b4b4b4"/><path d="M4.5 -7.6l2.4 2.4l-2.4 2.4l-2.4 -2.4z" fill="#a6a6a6"/></svg>
<svg style="left:297px;top:57.5px" width="16" height="16" viewBox="-8 -8 16 16"><path d="M-4.5 4.5L4 -5.5M2 -6.5l4 3" stroke="#a6a6a6" stroke-width="1.1"/><path d="M-4 2.1l2.4 2.4l-2.4 2.4l-2.4 -2.4z" fill="#a6a6a6"/><path d="M3.5 1.1l2.4 2.4l-2.4 2.4l-2.4 -2.4z" fill="#a6a6a6"/></svg>
<svg style="left:314px;top:57.5px" width="16" height="16" viewBox="-8 -8 16 16"><path d="M-5.8 3.5V-4.5H5.8V3.5" fill="none" stroke="#a6a6a6" stroke-width="1.2"/><path d="M0 1.6l2.2 2.2l-2.2 2.2l-2.2 -2.2z" fill="#a6a6a6"/></svg>
<svg style="left:331px;top:57.5px" width="16" height="16" viewBox="-8 -8 16 16"><path d="M-6 5.5L5 -5.5M-5 -2.5l3.5 1.5M-1.5 -5l0 3" stroke="#a6a6a6" stroke-width="1.1"/><path d="M3.5 1.6l2.4 2.4l-2.4 2.4l-2.4 -2.4z" fill="#a6a6a6"/></svg>
<svg style="left:348.5px;top:57.5px" width="16" height="16" viewBox="-8 -8 16 16"><path d="M-6 5.5L5 -5.5M-5.5 -3l7 5" stroke="#a6a6a6" stroke-width="1.1"/><path d="M3.5 1.6l2.4 2.4l-2.4 2.4l-2.4 -2.4z" fill="#a6a6a6"/></svg>
<div class="sep" style="left:366.5px;top:59px;height:13px"></div>
<svg style="left:370px;top:57.5px" width="16" height="16" viewBox="-8 -8 16 16"><path d="M-3.5 -7.7l2.4 2.4l-2.4 2.4l-2.4 -2.4z" fill="#a6a6a6"/><path d="M-6 0.5L6.5 -3" stroke="#a6a6a6" stroke-width="1.2"/><path d="M-3.5 0v6M4 -2.2v6" stroke="#a6a6a6" stroke-width="1.1" stroke-dasharray="1.6 0.8"/></svg>
<svg style="left:387px;top:57.5px" width="16" height="16" viewBox="-8 -8 16 16"><circle cx="-4.5" cy="-5" r="1.6" fill="#a6a6a6"/><path d="M-5.5 5.5L5.5 -4.5M-1.5 -3l2.5 2" stroke="#a6a6a6" stroke-width="1.2"/><path d="M4.5 1.9l2.4 2.4l-2.4 2.4l-2.4 -2.4z" fill="#a6a6a6"/></svg>
<div class="sep" style="left:405.5px;top:59px;height:13px"></div>
<svg style="left:408.5px;top:57.5px" width="16" height="16" viewBox="-8 -8 16 16"><path d="M-6 5.5L5.5 -5M-5.5 -2l4 2.5M-1 -4.5v3" stroke="#a6a6a6" stroke-width="1.1"/><path d="M3.5 2.1l2.4 2.4l-2.4 2.4l-2.4 -2.4z" fill="#a6a6a6"/></svg>
<svg style="left:426px;top:57.5px" width="16" height="16" viewBox="-8 -8 16 16"><path d="M-6.5 4L2 -6L5.5 -3L-3 7z" fill="none" stroke="#a6a6a6" stroke-width="1.1"/><path d="M-3.5 1l3 2.5M-0.5 -2.5l3 2.5" stroke="#a6a6a6" stroke-width="0.8"/><path d="M5 2.1l2.4 2.4l-2.4 2.4l-2.4 -2.4z" fill="#a6a6a6"/></svg>
<svg style="left:443px;top:57.5px" width="16" height="16" viewBox="-8 -8 16 16"><path d="M-3.5 -7.6l2.4 2.4l-2.4 2.4l-2.4 -2.4z" fill="#a6a6a6"/><path d="M-6 5L3.5 -6" stroke="#b3b3b3" stroke-width="2.6"/><path d="M-1.5 6L6 -2.5" stroke="#a6a6a6" stroke-width="1.1"/></svg>
<div class="dd" style="left:462.1px;top:64.7px;border-top-color:#111"></div>
<div class="abs" style="left:2px;top:79px;width:14px;height:1px;background-image:repeating-linear-gradient(to right,#9a9a9a 0,#9a9a9a 1px,transparent 1px,transparent 3px)"></div>
<div class="abs" style="left:0.5px;top:85.5px;width:16px;height:17.5px;box-sizing:border-box;border:1px solid #3d8fcb;background:#e1eefa"></div>
<svg style="left:0.5px;top:86.5px" width="16" height="16" viewBox="-8 -8 16 16"><path d="M-3 -6.5L4 0.8L0.8 1L3 5.2L1.2 6.2L-0.8 2L-3 4z" fill="#3b4f73" stroke="#141c2c" stroke-width="0.8"/></svg>
<svg style="left:0.5px;top:105.5px" width="16" height="16" viewBox="-8 -8 16 16"><path d="M-6 -5h12" stroke="#8f8f8f" stroke-width="0.9"/><rect x="-1.5" y="-6.5" width="3" height="3" fill="#fff" stroke="#8f8f8f" stroke-width="0.8"/><path d="M0 -2L4.5 2.5L2.4 2.7L3.8 5.5L2.6 6.2L1.3 3.4L0 4.8z" fill="#b5b5b5" stroke="#8f8f8f" stroke-width="0.5"/></svg>
<svg style="left:0.5px;top:125.4px" width="16" height="16" viewBox="-8 -8 16 16"><rect x="-6" y="-6" width="12" height="12" fill="none" stroke="#8f8f8f" stroke-width="0.9" stroke-dasharray="3.2 1.6"/><circle cx="0" cy="0" r="0.9" fill="#8f8f8f"/></svg>
<svg style="left:0.5px;top:144px" width="16" height="16" viewBox="-8 -8 16 16"><path d="M-5 -6L5 6" stroke="#8f8f8f" stroke-width="1"/></svg>
<svg style="left:0.5px;top:163px" width="16" height="16" viewBox="-8 -8 16 16"><rect x="-6" y="-6" width="12" height="12" fill="none" stroke="#8f8f8f" stroke-width="0.9" stroke-dasharray="3.2 1.6"/><path d="M-5.5 -5.5L5.5 5.5" stroke="#666" stroke-width="1.1"/></svg>
<svg style="left:0.5px;top:182.4px" width="16" height="16" viewBox="-8 -8 16 16"><rect x="-6" y="-6" width="12" height="12" fill="none" stroke="#8f8f8f" stroke-width="0.9" stroke-dasharray="3.2 1.6"/><path d="M-5.5 -5.5L5.5 5.5M5.5 -5.5L-5.5 5.5" stroke="#8f8f8f" stroke-width="1"/></svg>
<svg style="left:0.5px;top:201.4px" width="16" height="16" viewBox="-8 -8 16 16"><rect x="-6" y="-7" width="12" height="14" fill="none" stroke="#8f8f8f" stroke-width="0.9" stroke-dasharray="3.2 1.6"/><path d="M-4 -3.5h8M-4 0h8M-4 3.5h8" stroke="#b0b0b0" stroke-width="1.2"/><circle cx="0" cy="0" r="0.9" fill="#8f8f8f"/></svg>
<svg style="left:0.5px;top:221px" width="16" height="16" viewBox="-8 -8 16 16"><path d="M-5.5 -6H1.5L5.5 -2V5.5H-5.5z" fill="#d2d2d2" stroke="#a8a8a8" stroke-width="0.9"/></svg>
<svg style="left:0.5px;top:240px" width="16" height="16" viewBox="-8 -8 16 16"><rect x="-5.5" y="-5.5" width="11" height="11" fill="#d2d2d2" stroke="#a8a8a8" stroke-width="0.9"/></svg>
<svg style="left:0.5px;top:259.8px" width="16" height="16" viewBox="-8 -8 16 16"><rect x="-6" y="-7" width="12" height="14" fill="none" stroke="#8f8f8f" stroke-width="0.9" stroke-dasharray="3.2 1.6"/><rect x="-4" y="-4" width="8" height="8.5" fill="#d2d2d2"/><circle cx="0" cy="0.2" r="0.9" fill="#8f8f8f"/></svg>
<div class="dd" style="left:9.1px;top:279.7px;border-top-color:#111"></div>
<div class="abs" style="left:2px;top:303px;width:14px;height:1px;background-image:repeating-linear-gradient(to right,#9a9a9a 0,#9a9a9a 1px,transparent 1px,transparent 3px)"></div>
<div class="abs" style="left:0.5px;top:309.5px;width:16px;height:16.5px;box-sizing:border-box;border:1px solid #3d8fcb;background:#e1eefa"></div>
<svg style="left:0.5px;top:309.5px" width="16" height="16" viewBox="-8 -8 16 16"><path d="M-1 -7v14M-6.5 0h10" stroke="#1f2b40" stroke-width="0.9"/><circle cx="-1" cy="0" r="1.4" fill="#fff" stroke="#1f2b40" stroke-width="0.8"/><circle cx="3.5" cy="-5" r="1.4" fill="none" stroke="#1f2b40" stroke-width="0.8"/><path d="M2.9 0.5l3.4 -2.6v5.2z" fill="#1f2b40"/></svg>
<svg style="left:0.5px;top:329.5px" width="16" height="16" viewBox="-8 -8 16 16"><path d="M-5 5.5L4 -4" stroke="#1f2b40" stroke-width="0.9"/><circle cx="-5" cy="5.5" r="1.3" fill="#fff" stroke="#1f2b40" stroke-width="0.8"/><circle cx="-0.5" cy="0.8" r="1.3" fill="#fff" stroke="#1f2b40" stroke-width="0.8"/><circle cx="4" cy="-4" r="1.3" fill="#fff" stroke="#1f2b40" stroke-width="0.8"/><path d="M2.9 2.5l3.4 -2.6v5.2z" fill="#1f2b40"/></svg>
<svg style="left:0.5px;top:347.6px" width="16" height="16" viewBox="-8 -8 16 16"><path d="M-5.5 -6L4.5 6M4.5 -6L-5.5 6" stroke="#1f2b40" stroke-width="1"/><circle cx="-0.5" cy="0" r="1.4" fill="#fff" stroke="#1f2b40" stroke-width="0.8"/><path d="M2.9 0l3.4 -2.6v5.2z" fill="#1f2b40"/></svg>
<div class="abs" style="left:0.5px;top:367.5px;width:16px;height:17px;box-sizing:border-box;border:1px solid #3d8fcb;background:#e1eefa"></div>
<svg style="left:0.5px;top:368px" width="16" height="16" viewBox="-8 -8 16 16"><path d="M-1 -7v14M-6.5 0h10" stroke="#1f2b40" stroke-width="0.9"/><circle cx="-1" cy="0" r="1.4" fill="#fff" stroke="#1f2b40" stroke-width="0.8"/><path d="M2.9 0l3.4 -2.6v5.2z" fill="#1f2b40"/></svg>
<svg style="left:0.5px;top:386px" width="16" height="16" viewBox="-8 -8 16 16"><path d="M-5 -5L5 6.5" stroke="#1f2b40" stroke-width="1"/><circle cx="-2.5" cy="-2" r="1.4" fill="#fff" stroke="#1f2b40" stroke-width="0.8"/><path d="M2.4 -3.5l3.4 -2.6v5.2z" fill="#1f2b40"/></svg>
<svg style="left:0.5px;top:406px" width="16" height="16" viewBox="-8 -8 16 16"><rect x="-5.5" y="-7" width="11.5" height="14" fill="#d6d6d6"/><path d="M-4.2 -7v14M-2.4 -7v14M-0.6 -7v14M1.2 -7v14M3 -7v14M4.8 -7v14M-5.5 -5h11.5M-5.5 -3h11.5M-5.5 -1h11.5M-5.5 1h11.5M-5.5 3h11.5M-5.5 5h11.5" stroke="#9a9a9a" stroke-width="0.5"/><circle cx="1" cy="0" r="1.5" fill="#fff" stroke="#1f2b40" stroke-width="0.8"/><path d="M2.4 0l3.4 -2.6v5.2z" fill="#1f2b40"/></svg>
<div class="dd" style="left:9.1px;top:425.2px;border-top-color:#111"></div>
<div class="abs" style="left:2px;top:432.5px;width:14px;height:1px;background-image:repeating-linear-gradient(to right,#9a9a9a 0,#9a9a9a 1px,transparent 1px,transparent 3px)"></div>
<svg style="left:0.5px;top:438.7px" width="16" height="16" viewBox="-8 -8 16 16"><path d="M2 -7L6.8 -1.5L4.6 -1.5L6 2L4.6 2.7L3.2 -0.8L2 0.8z" fill="#5c7499" stroke="#1c2a44" stroke-width="0.6"/><text x="-7" y="6.5" font-family="Liberation Sans,sans-serif" font-size="7.5" fill="#6d7f9c">all</text></svg>
<svg style="left:0.5px;top:459px" width="16" height="16" viewBox="-8 -8 16 16"><path d="M2 -7L6.8 -1.5L4.6 -1.5L6 2L4.6 2.7L3.2 -0.8L2 0.8z" fill="#5c7499" stroke="#1c2a44" stroke-width="0.6"/><text x="-7" y="6.5" font-family="Liberation Sans,sans-serif" font-size="6.5" fill="#2a3550">PS</text></svg>
<svg style="left:0.5px;top:478px" width="16" height="16" viewBox="-8 -8 16 16"><path d="M2 -7L6.8 -1.5L4.6 -1.5L6 2L4.6 2.7L3.2 -0.8L2 0.8z" fill="#d0d0d0" stroke="#b0b0b0" stroke-width="0.6"/><text x="-7" y="6.5" font-family="Liberation Sans,sans-serif" font-size="7.5" fill="#b4b4b4">clr</text></svg>
<svg style="left:0.5px;top:496.7px" width="16" height="16" viewBox="-8 -8 16 16"><path d="M2 -7L6.8 -1.5L4.6 -1.5L6 2L4.6 2.7L3.2 -0.8L2 0.8z" fill="#5c7499" stroke="#1c2a44" stroke-width="0.6"/><path d="M-6 -4L4.5 7" stroke="#1f2b40" stroke-width="1.4"/><path d="M-6 -6h6M-6 -6v3M-6 2v4h3" stroke="#9fb3cf" stroke-width="0.7" stroke-dasharray="1 1" fill="none"/></svg>
<div class="dd" style="left:9.1px;top:516.2px;border-top-color:#111"></div>
<svg style="left:0;top:0" width="1366" height="733" viewBox="0 0 1366 733">
<rect x="671" y="187.00" width="15" height="29.57" fill="#0000e8"/>
<rect x="671" y="216.27" width="15" height="29.57" fill="#0050f0"/>
<rect x="671" y="245.53" width="15" height="29.57" fill="#00a8ff"/>
<rect x="671" y="274.80" width="15" height="29.57" fill="#00ffff"/>
<rect x="671" y="304.07" width="15" height="29.57" fill="#00f080"/>
<rect x="671" y="333.33" width="15" height="29.57" fill="#00e800"/>
<rect x="671" y="362.60" width="15" height="29.57" fill="#80f000"/>
<rect x="671" y="391.87" width="15" height="29.57" fill="#ffff00"/>
<rect x="671" y="421.13" width="15" height="29.57" fill="#ffd000"/>
<rect x="671" y="450.40" width="15" height="29.57" fill="#ffa800"/>
<rect x="671" y="479.67" width="15" height="29.57" fill="#ff8000"/>
<rect x="671" y="508.93" width="15" height="29.57" fill="#ff4800"/>
<rect x="671" y="538.20" width="15" height="29.57" fill="#ff0000"/>
<rect x="671" y="567.47" width="15" height="29.57" fill="#e00078"/>
<rect x="671" y="596.73" width="15" height="29.57" fill="#c000e0"/>
<text x="650.0" y="219.5" class="lbl" textLength="17.5" lengthAdjust="spacingAndGlyphs" fill="#222">390.</text>
<text x="650.0" y="248.7" class="lbl" textLength="17.5" lengthAdjust="spacingAndGlyphs" fill="#222">360.</text>
<text x="650.0" y="278.0" class="lbl" textLength="17.5" lengthAdjust="spacingAndGlyphs" fill="#222">330.</text>
<text x="650.0" y="307.3" class="lbl" textLength="17.5" lengthAdjust="spacingAndGlyphs" fill="#222">300.</text>
<text x="650.0" y="336.5" class="lbl" textLength="17.5" lengthAdjust="spacingAndGlyphs" fill="#222">270.</text>
<text x="650.0" y="365.8" class="lbl" textLength="17.5" lengthAdjust="spacingAndGlyphs" fill="#222">240.</text>
<text x="650.0" y="395.1" class="lbl" textLength="17.5" lengthAdjust="spacingAndGlyphs" fill="#222">210.</text>
<text x="650.0" y="424.3" class="lbl" textLength="17.5" lengthAdjust="spacingAndGlyphs" fill="#222">180.</text>
<text x="650.0" y="453.6" class="lbl" textLength="17.5" lengthAdjust="spacingAndGlyphs" fill="#222">150.</text>
<text x="650.0" y="482.9" class="lbl" textLength="17.5" lengthAdjust="spacingAndGlyphs" fill="#222">120.</text>
<text x="654.9" y="512.1" class="lbl" textLength="12.6" lengthAdjust="spacingAndGlyphs" fill="#222">90.</text>
<text x="654.9" y="541.4" class="lbl" textLength="12.6" lengthAdjust="spacingAndGlyphs" fill="#222">60.</text>
<text x="654.9" y="570.7" class="lbl" textLength="12.6" lengthAdjust="spacingAndGlyphs" fill="#222">30.</text>
<text x="659.9" y="599.9" class="lbl" textLength="7.6" lengthAdjust="spacingAndGlyphs" fill="#222">0.</text>
<line x1="59.0" y1="320.8" x2="91.1" y2="308.3" stroke="#9426d6" stroke-width="2"/>
<line x1="91.1" y1="308.3" x2="123.3" y2="320.8" stroke="#9426d6" stroke-width="2"/>
<line x1="123.3" y1="320.8" x2="155.4" y2="308.3" stroke="#9426d6" stroke-width="2"/>
<line x1="155.4" y1="308.3" x2="187.6" y2="320.8" stroke="#9426d6" stroke-width="2"/>
<line x1="187.6" y1="320.8" x2="219.7" y2="308.3" stroke="#9426d6" stroke-width="2"/>
<line x1="219.7" y1="308.3" x2="251.8" y2="320.8" stroke="#9426d6" stroke-width="2"/>
<line x1="251.8" y1="320.8" x2="284.0" y2="308.3" stroke="#9426d6" stroke-width="2"/>
<line x1="284.0" y1="308.3" x2="316.1" y2="320.8" stroke="#9426d6" stroke-width="2"/>
<line x1="316.1" y1="320.8" x2="348.3" y2="308.3" stroke="#9426d6" stroke-width="2"/>
<line x1="348.3" y1="308.3" x2="380.4" y2="320.8" stroke="#9426d6" stroke-width="2"/>
<line x1="380.4" y1="320.8" x2="412.6" y2="308.3" stroke="#9426d6" stroke-width="2"/>
<line x1="412.6" y1="308.3" x2="444.7" y2="320.8" stroke="#9426d6" stroke-width="2"/>
<line x1="444.7" y1="320.8" x2="476.8" y2="308.3" stroke="#9426d6" stroke-width="2"/>
<line x1="476.8" y1="308.3" x2="509.0" y2="320.8" stroke="#9426d6" stroke-width="2"/>
<line x1="509.0" y1="320.8" x2="541.1" y2="308.3" stroke="#9426d6" stroke-width="2"/>
<line x1="541.1" y1="308.3" x2="573.3" y2="320.8" stroke="#9426d6" stroke-width="2"/>
<line x1="573.3" y1="320.8" x2="605.4" y2="308.3" stroke="#9426d6" stroke-width="2"/>
<line x1="605.4" y1="308.3" x2="637.5" y2="320.8" stroke="#9426d6" stroke-width="2"/>
<line x1="59.0" y1="308.3" x2="59.0" y2="320.8" stroke="#1f8a50" stroke-width="1.2"/>
<line x1="91.1" y1="308.3" x2="91.1" y2="320.8" stroke="#1f8a50" stroke-width="1.2"/>
<line x1="123.3" y1="308.3" x2="123.3" y2="320.8" stroke="#1f8a50" stroke-width="1.2"/>
<line x1="155.4" y1="308.3" x2="155.4" y2="320.8" stroke="#1f8a50" stroke-width="1.2"/>
<line x1="187.6" y1="308.3" x2="187.6" y2="320.8" stroke="#1f8a50" stroke-width="1.2"/>
<line x1="219.7" y1="308.3" x2="219.7" y2="320.8" stroke="#1f8a50" stroke-width="1.2"/>
<line x1="251.8" y1="308.3" x2="251.8" y2="320.8" stroke="#1f8a50" stroke-width="1.2"/>
<line x1="284.0" y1="308.3" x2="284.0" y2="320.8" stroke="#1f8a50" stroke-width="1.2"/>
<line x1="316.1" y1="308.3" x2="316.1" y2="320.8" stroke="#1f8a50" stroke-width="1.2"/>
<line x1="348.3" y1="308.3" x2="348.3" y2="320.8" stroke="#1f8a50" stroke-width="1.2"/>
<line x1="380.4" y1="308.3" x2="380.4" y2="320.8" stroke="#1f8a50" stroke-width="1.2"/>
<line x1="412.6" y1="308.3" x2="412.6" y2="320.8" stroke="#1f8a50" stroke-width="1.2"/>
<line x1="444.7" y1="308.3" x2="444.7" y2="320.8" stroke="#1f8a50" stroke-width="1.2"/>
<line x1="476.8" y1="308.3" x2="476.8" y2="320.8" stroke="#1f8a50" stroke-width="1.2"/>
<line x1="509.0" y1="308.3" x2="509.0" y2="320.8" stroke="#1f8a50" stroke-width="1.2"/>
<line x1="541.1" y1="308.3" x2="541.1" y2="320.8" stroke="#1f8a50" stroke-width="1.2"/>
<line x1="573.3" y1="308.3" x2="573.3" y2="320.8" stroke="#1f8a50" stroke-width="1.2"/>
<line x1="605.4" y1="308.3" x2="605.4" y2="320.8" stroke="#1f8a50" stroke-width="1.2"/>
<line x1="637.5" y1="308.3" x2="637.5" y2="320.8" stroke="#1f8a50" stroke-width="1.2"/>
<line x1="59.0" y1="308.3" x2="637.5" y2="308.3" stroke="#841129" stroke-width="2.4"/>
<line x1="59.0" y1="320.8" x2="637.5" y2="320.8" stroke="#1f9a58" stroke-width="2.2"/>
<text x="65.1" y="316.5" class="lbls" textLength="8.5" lengthAdjust="spacingAndGlyphs" >44</text>
<text x="103.2" y="316.5" class="lbls" textLength="8.5" lengthAdjust="spacingAndGlyphs" >12</text>
<text x="129.4" y="316.5" class="lbls" textLength="8.5" lengthAdjust="spacingAndGlyphs" >43</text>
<text x="167.5" y="316.5" class="lbls" textLength="8.5" lengthAdjust="spacingAndGlyphs" >14</text>
<text x="193.6" y="316.5" class="lbls" textLength="8.5" lengthAdjust="spacingAndGlyphs" >15</text>
<text x="231.8" y="316.5" class="lbls" textLength="8.5" lengthAdjust="spacingAndGlyphs" >16</text>
<text x="257.9" y="316.5" class="lbls" textLength="8.5" lengthAdjust="spacingAndGlyphs" >17</text>
<text x="296.1" y="316.5" class="lbls" textLength="8.5" lengthAdjust="spacingAndGlyphs" >18</text>
<text x="322.2" y="316.5" class="lbls" textLength="8.5" lengthAdjust="spacingAndGlyphs" >19</text>
<text x="360.3" y="316.5" class="lbls" textLength="8.5" lengthAdjust="spacingAndGlyphs" >20</text>
<text x="386.5" y="316.5" class="lbls" textLength="8.5" lengthAdjust="spacingAndGlyphs" >21</text>
<text x="424.6" y="316.5" class="lbls" textLength="8.5" lengthAdjust="spacingAndGlyphs" >22</text>
<text x="450.8" y="316.5" class="lbls" textLength="8.5" lengthAdjust="spacingAndGlyphs" >23</text>
<text x="488.9" y="316.5" class="lbls" textLength="8.5" lengthAdjust="spacingAndGlyphs" >10</text>
<text x="515.1" y="316.5" class="lbls" textLength="8.5" lengthAdjust="spacingAndGlyphs" >31</text>
<text x="553.2" y="316.5" class="lbls" textLength="8.5" lengthAdjust="spacingAndGlyphs" >16</text>
<text x="579.3" y="316.5" class="lbls" textLength="8.5" lengthAdjust="spacingAndGlyphs" >35</text>
<text x="617.5" y="316.5" class="lbls" textLength="8.5" lengthAdjust="spacingAndGlyphs" >18</text>
<text transform="translate(54.5 324.8) rotate(-90)" class="lbl">23-1</text>
<text transform="translate(86.6 324.3) rotate(-90)" class="lbl">24</text>
<text transform="translate(118.8 324.3) rotate(-90)" class="lbl">26</text>
<text transform="translate(150.9 324.3) rotate(-90)" class="lbl">28</text>
<text transform="translate(183.1 324.3) rotate(-90)" class="lbl">30</text>
<text transform="translate(215.2 324.3) rotate(-90)" class="lbl">32</text>
<text transform="translate(247.3 324.3) rotate(-90)" class="lbl">34</text>
<text transform="translate(279.5 324.3) rotate(-90)" class="lbl">36</text>
<text transform="translate(311.6 324.3) rotate(-90)" class="lbl">38</text>
<text transform="translate(343.8 324.3) rotate(-90)" class="lbl">40</text>
<text transform="translate(375.9 324.3) rotate(-90)" class="lbl">42</text>
<text transform="translate(408.1 324.3) rotate(-90)" class="lbl">44</text>
<text transform="translate(440.2 324.3) rotate(-90)" class="lbl">46</text>
<text transform="translate(472.3 324.3) rotate(-90)" class="lbl">48</text>
<text transform="translate(504.5 324.3) rotate(-90)" class="lbl">50</text>
<text transform="translate(536.6 324.3) rotate(-90)" class="lbl">52</text>
<text transform="translate(568.8 324.3) rotate(-90)" class="lbl">54</text>
<text transform="translate(600.9 324.3) rotate(-90)" class="lbl">56</text>
<text transform="translate(633.0 324.3) rotate(-90)" class="lbl">58</text>
<circle cx="59.0" cy="309.5" r="3.7" fill="#18e018"/>
<circle cx="59.0" cy="320.3" r="3.7" fill="#18e018"/>
<circle cx="64.5" cy="320.0" r="3.6" fill="#18e018"/>
<circle cx="86.6" cy="310.3" r="3.4" fill="#18e018"/>
<circle cx="95.6" cy="310.3" r="3.4" fill="#18e018"/>
<circle cx="91.1" cy="310.5" r="3.1" fill="#18e018"/>
<circle cx="91.1" cy="318.6" r="3.3" fill="#18e018"/>
<circle cx="123.3" cy="310.8" r="3.3" fill="#18e018"/>
<circle cx="118.8" cy="319.3" r="3.4" fill="#18e018"/>
<circle cx="127.8" cy="319.3" r="3.4" fill="#18e018"/>
<circle cx="123.3" cy="319.0" r="3.1" fill="#18e018"/>
<circle cx="150.9" cy="310.3" r="3.4" fill="#18e018"/>
<circle cx="159.9" cy="310.3" r="3.4" fill="#18e018"/>
<circle cx="155.4" cy="310.5" r="3.1" fill="#18e018"/>
<circle cx="155.4" cy="318.6" r="3.3" fill="#18e018"/>
<circle cx="187.6" cy="310.8" r="3.3" fill="#18e018"/>
<circle cx="183.1" cy="319.3" r="3.4" fill="#18e018"/>
<circle cx="192.1" cy="319.3" r="3.4" fill="#18e018"/>
<circle cx="187.6" cy="319.0" r="3.1" fill="#18e018"/>
<circle cx="215.2" cy="310.3" r="3.4" fill="#18e018"/>
<circle cx="224.2" cy="310.3" r="3.4" fill="#18e018"/>
<circle cx="219.7" cy="310.5" r="3.1" fill="#18e018"/>
<circle cx="219.7" cy="318.6" r="3.3" fill="#18e018"/>
<circle cx="251.8" cy="309.5" r="3.7" fill="#18e018"/>
<circle cx="251.8" cy="320.3" r="3.7" fill="#18e018"/>
<circle cx="257.4" cy="320.0" r="3.6" fill="#18e018"/>
<circle cx="246.3" cy="320.0" r="3.6" fill="#18e018"/>
<circle cx="279.5" cy="310.3" r="3.4" fill="#18e018"/>
<circle cx="288.5" cy="310.3" r="3.4" fill="#18e018"/>
<circle cx="284.0" cy="310.5" r="3.1" fill="#18e018"/>
<circle cx="284.0" cy="318.6" r="3.3" fill="#18e018"/>
<circle cx="316.1" cy="310.8" r="3.3" fill="#18e018"/>
<circle cx="311.6" cy="319.3" r="3.4" fill="#18e018"/>
<circle cx="320.6" cy="319.3" r="3.4" fill="#18e018"/>
<circle cx="316.1" cy="319.0" r="3.1" fill="#18e018"/>
<circle cx="343.8" cy="310.3" r="3.4" fill="#18e018"/>
<circle cx="352.8" cy="310.3" r="3.4" fill="#18e018"/>
<circle cx="348.3" cy="310.5" r="3.1" fill="#18e018"/>
<circle cx="348.3" cy="318.6" r="3.3" fill="#18e018"/>
<circle cx="380.4" cy="310.8" r="3.3" fill="#18e018"/>
<circle cx="375.9" cy="319.3" r="3.4" fill="#18e018"/>
<circle cx="384.9" cy="319.3" r="3.4" fill="#18e018"/>
<circle cx="380.4" cy="319.0" r="3.1" fill="#18e018"/>
<circle cx="408.1" cy="310.3" r="3.4" fill="#18e018"/>
<circle cx="417.1" cy="310.3" r="3.4" fill="#18e018"/>
<circle cx="412.6" cy="310.5" r="3.1" fill="#18e018"/>
<circle cx="412.6" cy="318.6" r="3.3" fill="#18e018"/>
<circle cx="444.7" cy="309.5" r="3.7" fill="#18e018"/>
<circle cx="444.7" cy="320.3" r="3.7" fill="#18e018"/>
<circle cx="450.2" cy="320.0" r="3.6" fill="#18e018"/>
<circle cx="439.2" cy="320.0" r="3.6" fill="#18e018"/>
<circle cx="472.3" cy="310.3" r="3.4" fill="#18e018"/>
<circle cx="481.3" cy="310.3" r="3.4" fill="#18e018"/>
<circle cx="476.8" cy="310.5" r="3.1" fill="#18e018"/>
<circle cx="476.8" cy="318.6" r="3.3" fill="#18e018"/>
<circle cx="509.0" cy="310.8" r="3.3" fill="#18e018"/>
<circle cx="504.5" cy="319.3" r="3.4" fill="#18e018"/>
<circle cx="513.5" cy="319.3" r="3.4" fill="#18e018"/>
<circle cx="509.0" cy="319.0" r="3.1" fill="#18e018"/>
<circle cx="536.6" cy="310.3" r="3.4" fill="#18e018"/>
<circle cx="545.6" cy="310.3" r="3.4" fill="#18e018"/>
<circle cx="541.1" cy="310.5" r="3.1" fill="#18e018"/>
<circle cx="541.1" cy="318.6" r="3.3" fill="#18e018"/>
<circle cx="573.3" cy="310.8" r="3.3" fill="#18e018"/>
<circle cx="568.8" cy="319.3" r="3.4" fill="#18e018"/>
<circle cx="577.8" cy="319.3" r="3.4" fill="#18e018"/>
<circle cx="573.3" cy="319.0" r="3.1" fill="#18e018"/>
<circle cx="600.9" cy="310.3" r="3.4" fill="#18e018"/>
<circle cx="609.9" cy="310.3" r="3.4" fill="#18e018"/>
<circle cx="605.4" cy="310.5" r="3.1" fill="#18e018"/>
<circle cx="605.4" cy="318.6" r="3.3" fill="#18e018"/>
<circle cx="637.5" cy="309.5" r="3.7" fill="#18e018"/>
<circle cx="637.5" cy="320.3" r="3.7" fill="#18e018"/>
<circle cx="632.0" cy="320.0" r="3.6" fill="#18e018"/>
<circle cx="59.0" cy="308.3" r="1.3" fill="#111"/>
<circle cx="59.0" cy="320.8" r="1.3" fill="#111"/>
<circle cx="91.1" cy="308.3" r="1.3" fill="#111"/>
<circle cx="91.1" cy="320.8" r="1.3" fill="#111"/>
<circle cx="123.3" cy="308.3" r="1.3" fill="#111"/>
<circle cx="123.3" cy="320.8" r="1.3" fill="#111"/>
<circle cx="155.4" cy="308.3" r="1.3" fill="#111"/>
<circle cx="155.4" cy="320.8" r="1.3" fill="#111"/>
<circle cx="187.6" cy="308.3" r="1.3" fill="#111"/>
<circle cx="187.6" cy="320.8" r="1.3" fill="#111"/>
<circle cx="219.7" cy="308.3" r="1.3" fill="#111"/>
<circle cx="219.7" cy="320.8" r="1.3" fill="#111"/>
<circle cx="251.8" cy="308.3" r="1.3" fill="#111"/>
<circle cx="251.8" cy="320.8" r="1.3" fill="#111"/>
<circle cx="284.0" cy="308.3" r="1.3" fill="#111"/>
<circle cx="284.0" cy="320.8" r="1.3" fill="#111"/>
<circle cx="316.1" cy="308.3" r="1.3" fill="#111"/>
<circle cx="316.1" cy="320.8" r="1.3" fill="#111"/>
<circle cx="348.3" cy="308.3" r="1.3" fill="#111"/>
<circle cx="348.3" cy="320.8" r="1.3" fill="#111"/>
<circle cx="380.4" cy="308.3" r="1.3" fill="#111"/>
<circle cx="380.4" cy="320.8" r="1.3" fill="#111"/>
<circle cx="412.6" cy="308.3" r="1.3" fill="#111"/>
<circle cx="412.6" cy="320.8" r="1.3" fill="#111"/>
<circle cx="444.7" cy="308.3" r="1.3" fill="#111"/>
<circle cx="444.7" cy="320.8" r="1.3" fill="#111"/>
<circle cx="476.8" cy="308.3" r="1.3" fill="#111"/>
<circle cx="476.8" cy="320.8" r="1.3" fill="#111"/>
<circle cx="509.0" cy="308.3" r="1.3" fill="#111"/>
<circle cx="509.0" cy="320.8" r="1.3" fill="#111"/>
<circle cx="541.1" cy="308.3" r="1.3" fill="#111"/>
<circle cx="541.1" cy="320.8" r="1.3" fill="#111"/>
<circle cx="573.3" cy="308.3" r="1.3" fill="#111"/>
<circle cx="573.3" cy="320.8" r="1.3" fill="#111"/>
<circle cx="605.4" cy="308.3" r="1.3" fill="#111"/>
<circle cx="605.4" cy="320.8" r="1.3" fill="#111"/>
<circle cx="637.5" cy="308.3" r="1.3" fill="#111"/>
<circle cx="637.5" cy="320.8" r="1.3" fill="#111"/>
<path d="M58.5 320.8L48.0 335.3H68.0ZM58.5 320.8V335.3" fill="none" stroke="#5cd95c" stroke-width="1.1"/>
<path d="M251.3 320.8L240.8 335.3H260.9ZM251.3 320.8V335.3" fill="none" stroke="#5cd95c" stroke-width="1.1"/>
<path d="M444.2 320.8L433.7 335.3H453.7ZM444.2 320.8V335.3" fill="none" stroke="#5cd95c" stroke-width="1.1"/>
<path d="M637.0 320.8L626.5 335.3H646.5ZM637.0 320.8V335.3" fill="none" stroke="#5cd95c" stroke-width="1.1"/>
<text x="50.2" y="304.6" class="lbl" textLength="24.8" lengthAdjust="spacingAndGlyphs" >F21-1</text>
<text x="67.2" y="304.6" class="lbl" textLength="24.8" lengthAdjust="spacingAndGlyphs" >F21-2</text>
<text x="80.2" y="304.6" class="lbl" textLength="24.8" lengthAdjust="spacingAndGlyphs" >F21-3</text>
<text x="94.8" y="304.6" class="lbl" textLength="24.8" lengthAdjust="spacingAndGlyphs" >F21-4</text>
<text x="126.8" y="304.6" class="lbl" textLength="24.8" lengthAdjust="spacingAndGlyphs" >F21-5</text>
<text x="158.6" y="304.6" class="lbl" textLength="24.8" lengthAdjust="spacingAndGlyphs" >F21-6</text>
<text x="188.8" y="304.6" class="lbl" textLength="24.8" lengthAdjust="spacingAndGlyphs" >F21-7</text>
<text x="205.8" y="304.6" class="lbl" textLength="24.8" lengthAdjust="spacingAndGlyphs" >F21-8</text>
<text x="218.8" y="304.6" class="lbl" textLength="24.8" lengthAdjust="spacingAndGlyphs" >F21-9</text>
<text x="231.6" y="304.6" class="lbl" textLength="30.4" lengthAdjust="spacingAndGlyphs" >F21-10</text>
<text x="243.0" y="304.6" class="lbl" textLength="24.8" lengthAdjust="spacingAndGlyphs" >F22-1</text>
<text x="260.1" y="304.6" class="lbl" textLength="24.8" lengthAdjust="spacingAndGlyphs" >F22-2</text>
<text x="273.1" y="304.6" class="lbl" textLength="24.8" lengthAdjust="spacingAndGlyphs" >F22-3</text>
<text x="287.6" y="304.6" class="lbl" textLength="24.8" lengthAdjust="spacingAndGlyphs" >F22-4</text>
<text x="319.6" y="304.6" class="lbl" textLength="24.8" lengthAdjust="spacingAndGlyphs" >F22-5</text>
<text x="351.4" y="304.6" class="lbl" textLength="24.8" lengthAdjust="spacingAndGlyphs" >F22-6</text>
<text x="381.6" y="304.6" class="lbl" textLength="24.8" lengthAdjust="spacingAndGlyphs" >F22-7</text>
<text x="398.6" y="304.6" class="lbl" textLength="24.8" lengthAdjust="spacingAndGlyphs" >F22-8</text>
<text x="411.6" y="304.6" class="lbl" textLength="24.8" lengthAdjust="spacingAndGlyphs" >F22-9</text>
<text x="424.4" y="304.6" class="lbl" textLength="30.4" lengthAdjust="spacingAndGlyphs" >F22-10</text>
<text x="435.9" y="304.6" class="lbl" textLength="24.8" lengthAdjust="spacingAndGlyphs" >F23-1</text>
<text x="452.9" y="304.6" class="lbl" textLength="24.8" lengthAdjust="spacingAndGlyphs" >F23-2</text>
<text x="465.9" y="304.6" class="lbl" textLength="24.8" lengthAdjust="spacingAndGlyphs" >F23-3</text>
<text x="480.5" y="304.6" class="lbl" textLength="24.8" lengthAdjust="spacingAndGlyphs" >F23-4</text>
<text x="512.5" y="304.6" class="lbl" textLength="24.8" lengthAdjust="spacingAndGlyphs" >F23-5</text>
<text x="544.3" y="304.6" class="lbl" textLength="24.8" lengthAdjust="spacingAndGlyphs" >F23-6</text>
<text x="574.5" y="304.6" class="lbl" textLength="24.8" lengthAdjust="spacingAndGlyphs" >F23-7</text>
<text x="591.5" y="304.6" class="lbl" textLength="24.8" lengthAdjust="spacingAndGlyphs" >F23-8</text>
<text x="604.5" y="304.6" class="lbl" textLength="24.8" lengthAdjust="spacingAndGlyphs" >F23-9</text>
<text x="617.3" y="304.6" class="lbl" textLength="30.4" lengthAdjust="spacingAndGlyphs" >F23-10</text>
<polygon points="59.0,462.9 63.0,462.9 63.0,466.2 62.5,465.9 59.0,462.9" fill="#e00078"/>
<polygon points="63.0,462.9 67.0,462.9 67.0,468.7 63.0,466.2" fill="#ff0000"/>
<polygon points="67.0,462.9 69.0,462.9 69.0,470.0 67.0,468.7" fill="#ff4800"/>
<polygon points="69.0,462.9 73.0,462.9 73.0,472.5 69.0,470.0" fill="#ff8000"/>
<polygon points="73.0,462.9 76.0,462.9 76.0,474.4 73.0,472.5" fill="#ffa800"/>
<polygon points="76.0,462.9 80.0,462.9 80.0,477.0 76.0,474.4" fill="#ffd000"/>
<polygon points="80.0,462.9 87.0,462.9 87.0,480.0 81.0,477.6 80.0,477.0" fill="#ffff00"/>
<polygon points="87.0,462.9 93.0,462.9 93.0,482.5 87.0,480.0" fill="#80f000"/>
<polygon points="93.0,462.9 98.0,462.9 98.0,484.5 93.0,482.5" fill="#00e800"/>
<polygon points="98.0,462.9 104.0,462.9 104.0,486.9 103.8,486.9 98.0,484.5" fill="#00f080"/>
<polygon points="104.0,462.9 114.0,462.9 114.0,489.4 104.0,486.9" fill="#00ffff"/>
<polygon points="114.0,462.9 125.0,462.9 125.0,492.0 114.0,489.4" fill="#00a8ff"/>
<polygon points="125.0,462.9 143.0,462.9 143.0,493.7 130.0,493.2 125.0,492.0" fill="#0050f0"/>
<polygon points="143.0,462.9 168.0,462.9 168.0,493.7 155.3,494.2 143.0,493.7" fill="#0000e8"/>
<polygon points="168.0,462.9 186.0,462.9 186.0,491.9 180.7,493.2 168.0,493.7" fill="#0050f0"/>
<polygon points="186.0,462.9 197.0,462.9 197.0,489.3 186.0,491.9" fill="#00a8ff"/>
<polygon points="197.0,462.9 207.0,462.9 207.0,486.9 206.9,486.9 197.0,489.3" fill="#00ffff"/>
<polygon points="207.0,462.9 213.0,462.9 213.0,484.4 207.0,486.9" fill="#00f080"/>
<polygon points="213.0,462.9 218.0,462.9 218.0,482.4 213.0,484.4" fill="#00e800"/>
<polygon points="218.0,462.9 224.0,462.9 224.0,479.9 218.0,482.4" fill="#80f000"/>
<polygon points="224.0,462.9 231.0,462.9 231.0,476.8 229.7,477.6 224.0,479.9" fill="#ffff00"/>
<polygon points="231.0,462.9 234.0,462.9 234.0,474.9 231.0,476.8" fill="#ffd000"/>
<polygon points="234.0,462.9 238.0,462.9 238.0,472.4 234.0,474.9" fill="#ffa800"/>
<polygon points="238.0,462.9 242.0,462.9 242.0,469.9 238.0,472.4" fill="#ff8000"/>
<polygon points="242.0,462.9 244.0,462.9 244.0,468.6 242.0,469.9" fill="#ff4800"/>
<polygon points="244.0,462.9 248.0,462.9 248.0,466.1 244.0,468.6" fill="#ff0000"/>
<polygon points="248.0,462.9 251.8,462.9 251.8,462.9 248.3,465.9 248.0,466.1" fill="#e00078"/>
<line x1="67.0" y1="463.9" x2="67.0" y2="468.3" stroke="#fff" stroke-opacity="0.22" stroke-width="0.7"/>
<line x1="75.1" y1="463.9" x2="75.1" y2="473.4" stroke="#fff" stroke-opacity="0.22" stroke-width="0.7"/>
<line x1="83.1" y1="463.9" x2="83.1" y2="478.0" stroke="#fff" stroke-opacity="0.22" stroke-width="0.7"/>
<line x1="91.1" y1="463.9" x2="91.1" y2="481.2" stroke="#fff" stroke-opacity="0.22" stroke-width="0.7"/>
<line x1="99.2" y1="463.9" x2="99.2" y2="484.5" stroke="#fff" stroke-opacity="0.22" stroke-width="0.7"/>
<line x1="107.2" y1="463.9" x2="107.2" y2="487.2" stroke="#fff" stroke-opacity="0.22" stroke-width="0.7"/>
<line x1="115.2" y1="463.9" x2="115.2" y2="489.2" stroke="#fff" stroke-opacity="0.22" stroke-width="0.7"/>
<line x1="123.3" y1="463.9" x2="123.3" y2="491.1" stroke="#fff" stroke-opacity="0.22" stroke-width="0.7"/>
<line x1="131.3" y1="463.9" x2="131.3" y2="492.8" stroke="#fff" stroke-opacity="0.22" stroke-width="0.7"/>
<line x1="139.4" y1="463.9" x2="139.4" y2="493.1" stroke="#fff" stroke-opacity="0.22" stroke-width="0.7"/>
<line x1="147.4" y1="463.9" x2="147.4" y2="493.4" stroke="#fff" stroke-opacity="0.22" stroke-width="0.7"/>
<line x1="155.4" y1="463.9" x2="155.4" y2="493.7" stroke="#fff" stroke-opacity="0.22" stroke-width="0.7"/>
<line x1="163.5" y1="463.9" x2="163.5" y2="493.4" stroke="#fff" stroke-opacity="0.22" stroke-width="0.7"/>
<line x1="171.5" y1="463.9" x2="171.5" y2="493.1" stroke="#fff" stroke-opacity="0.22" stroke-width="0.7"/>
<line x1="179.5" y1="463.9" x2="179.5" y2="492.7" stroke="#fff" stroke-opacity="0.22" stroke-width="0.7"/>
<line x1="187.6" y1="463.9" x2="187.6" y2="491.0" stroke="#fff" stroke-opacity="0.22" stroke-width="0.7"/>
<line x1="195.6" y1="463.9" x2="195.6" y2="489.1" stroke="#fff" stroke-opacity="0.22" stroke-width="0.7"/>
<line x1="203.6" y1="463.9" x2="203.6" y2="487.2" stroke="#fff" stroke-opacity="0.22" stroke-width="0.7"/>
<line x1="211.7" y1="463.9" x2="211.7" y2="484.5" stroke="#fff" stroke-opacity="0.22" stroke-width="0.7"/>
<line x1="219.7" y1="463.9" x2="219.7" y2="481.2" stroke="#fff" stroke-opacity="0.22" stroke-width="0.7"/>
<line x1="227.7" y1="463.9" x2="227.7" y2="477.9" stroke="#fff" stroke-opacity="0.22" stroke-width="0.7"/>
<line x1="235.8" y1="463.9" x2="235.8" y2="473.3" stroke="#fff" stroke-opacity="0.22" stroke-width="0.7"/>
<line x1="243.8" y1="463.9" x2="243.8" y2="468.2" stroke="#fff" stroke-opacity="0.22" stroke-width="0.7"/>
<polyline points="59.0,463.2 62.5,466.2 81.0,477.9 103.8,487.2 130.0,493.5 155.3,494.5 180.7,493.5 206.9,487.2 229.7,477.9 248.3,466.2 251.8,463.2" fill="none" stroke="#1616b4" stroke-width="1.6" stroke-linejoin="round"/>
<polygon points="251.8,462.9 255.8,462.9 255.8,466.2 255.3,465.9 251.8,462.9" fill="#e00078"/>
<polygon points="255.8,462.9 259.9,462.9 259.9,468.7 255.8,466.2" fill="#ff0000"/>
<polygon points="259.9,462.9 261.9,462.9 261.9,470.0 259.9,468.7" fill="#ff4800"/>
<polygon points="261.9,462.9 265.9,462.9 265.9,472.5 261.9,470.0" fill="#ff8000"/>
<polygon points="265.9,462.9 268.9,462.9 268.9,474.4 265.9,472.5" fill="#ffa800"/>
<polygon points="268.9,462.9 272.9,462.9 272.9,477.0 268.9,474.4" fill="#ffd000"/>
<polygon points="272.9,462.9 279.9,462.9 279.9,480.0 273.9,477.6 272.9,477.0" fill="#ffff00"/>
<polygon points="279.9,462.9 285.9,462.9 285.9,482.5 279.9,480.0" fill="#80f000"/>
<polygon points="285.9,462.9 290.9,462.9 290.9,484.5 285.9,482.5" fill="#00e800"/>
<polygon points="290.9,462.9 296.9,462.9 296.9,486.9 296.6,486.9 290.9,484.5" fill="#00f080"/>
<polygon points="296.9,462.9 306.9,462.9 306.9,489.4 296.9,486.9" fill="#00ffff"/>
<polygon points="306.9,462.9 317.9,462.9 317.9,492.0 306.9,489.4" fill="#00a8ff"/>
<polygon points="317.9,462.9 335.9,462.9 335.9,493.7 322.9,493.2 317.9,492.0" fill="#0050f0"/>
<polygon points="335.9,462.9 360.9,462.9 360.9,493.7 348.1,494.2 335.9,493.7" fill="#0000e8"/>
<polygon points="360.9,462.9 378.9,462.9 378.9,491.9 373.6,493.2 360.9,493.7" fill="#0050f0"/>
<polygon points="378.9,462.9 389.9,462.9 389.9,489.3 378.9,491.9" fill="#00a8ff"/>
<polygon points="389.9,462.9 399.9,462.9 399.9,486.9 399.8,486.9 389.9,489.3" fill="#00ffff"/>
<polygon points="399.9,462.9 405.9,462.9 405.9,484.4 399.9,486.9" fill="#00f080"/>
<polygon points="405.9,462.9 410.9,462.9 410.9,482.4 405.9,484.4" fill="#00e800"/>
<polygon points="410.9,462.9 416.9,462.9 416.9,479.9 410.9,482.4" fill="#80f000"/>
<polygon points="416.9,462.9 423.9,462.9 423.9,476.8 422.5,477.6 416.9,479.9" fill="#ffff00"/>
<polygon points="423.9,462.9 426.9,462.9 426.9,474.9 423.9,476.8" fill="#ffd000"/>
<polygon points="426.9,462.9 430.9,462.9 430.9,472.4 426.9,474.9" fill="#ffa800"/>
<polygon points="430.9,462.9 434.9,462.9 434.9,469.9 430.9,472.4" fill="#ff8000"/>
<polygon points="434.9,462.9 436.9,462.9 436.9,468.6 434.9,469.9" fill="#ff4800"/>
<polygon points="436.9,462.9 440.9,462.9 440.9,466.1 436.9,468.6" fill="#ff0000"/>
<polygon points="440.9,462.9 444.7,462.9 444.7,462.9 441.2,465.9 440.9,466.1" fill="#e00078"/>
<line x1="259.9" y1="463.9" x2="259.9" y2="468.3" stroke="#fff" stroke-opacity="0.22" stroke-width="0.7"/>
<line x1="267.9" y1="463.9" x2="267.9" y2="473.4" stroke="#fff" stroke-opacity="0.22" stroke-width="0.7"/>
<line x1="276.0" y1="463.9" x2="276.0" y2="478.0" stroke="#fff" stroke-opacity="0.22" stroke-width="0.7"/>
<line x1="284.0" y1="463.9" x2="284.0" y2="481.2" stroke="#fff" stroke-opacity="0.22" stroke-width="0.7"/>
<line x1="292.0" y1="463.9" x2="292.0" y2="484.5" stroke="#fff" stroke-opacity="0.22" stroke-width="0.7"/>
<line x1="300.1" y1="463.9" x2="300.1" y2="487.2" stroke="#fff" stroke-opacity="0.22" stroke-width="0.7"/>
<line x1="308.1" y1="463.9" x2="308.1" y2="489.2" stroke="#fff" stroke-opacity="0.22" stroke-width="0.7"/>
<line x1="316.1" y1="463.9" x2="316.1" y2="491.1" stroke="#fff" stroke-opacity="0.22" stroke-width="0.7"/>
<line x1="324.2" y1="463.9" x2="324.2" y2="492.8" stroke="#fff" stroke-opacity="0.22" stroke-width="0.7"/>
<line x1="332.2" y1="463.9" x2="332.2" y2="493.1" stroke="#fff" stroke-opacity="0.22" stroke-width="0.7"/>
<line x1="340.2" y1="463.9" x2="340.2" y2="493.4" stroke="#fff" stroke-opacity="0.22" stroke-width="0.7"/>
<line x1="348.3" y1="463.9" x2="348.3" y2="493.7" stroke="#fff" stroke-opacity="0.22" stroke-width="0.7"/>
<line x1="356.3" y1="463.9" x2="356.3" y2="493.4" stroke="#fff" stroke-opacity="0.22" stroke-width="0.7"/>
<line x1="364.3" y1="463.9" x2="364.3" y2="493.1" stroke="#fff" stroke-opacity="0.22" stroke-width="0.7"/>
<line x1="372.4" y1="463.9" x2="372.4" y2="492.7" stroke="#fff" stroke-opacity="0.22" stroke-width="0.7"/>
<line x1="380.4" y1="463.9" x2="380.4" y2="491.0" stroke="#fff" stroke-opacity="0.22" stroke-width="0.7"/>
<line x1="388.5" y1="463.9" x2="388.5" y2="489.1" stroke="#fff" stroke-opacity="0.22" stroke-width="0.7"/>
<line x1="396.5" y1="463.9" x2="396.5" y2="487.2" stroke="#fff" stroke-opacity="0.22" stroke-width="0.7"/>
<line x1="404.5" y1="463.9" x2="404.5" y2="484.5" stroke="#fff" stroke-opacity="0.22" stroke-width="0.7"/>
<line x1="412.6" y1="463.9" x2="412.6" y2="481.2" stroke="#fff" stroke-opacity="0.22" stroke-width="0.7"/>
<line x1="420.6" y1="463.9" x2="420.6" y2="477.9" stroke="#fff" stroke-opacity="0.22" stroke-width="0.7"/>
<line x1="428.6" y1="463.9" x2="428.6" y2="473.3" stroke="#fff" stroke-opacity="0.22" stroke-width="0.7"/>
<line x1="436.7" y1="463.9" x2="436.7" y2="468.2" stroke="#fff" stroke-opacity="0.22" stroke-width="0.7"/>
<polyline points="251.8,463.2 255.3,466.2 273.9,477.9 296.6,487.2 322.9,493.5 348.1,494.5 373.6,493.5 399.8,487.2 422.5,477.9 441.2,466.2 444.7,463.2" fill="none" stroke="#1616b4" stroke-width="1.6" stroke-linejoin="round"/>
<polygon points="444.7,462.9 448.7,462.9 448.7,466.2 448.2,465.9 444.7,462.9" fill="#e00078"/>
<polygon points="448.7,462.9 452.7,462.9 452.7,468.7 448.7,466.2" fill="#ff0000"/>
<polygon points="452.7,462.9 454.7,462.9 454.7,470.0 452.7,468.7" fill="#ff4800"/>
<polygon points="454.7,462.9 458.7,462.9 458.7,472.5 454.7,470.0" fill="#ff8000"/>
<polygon points="458.7,462.9 461.7,462.9 461.7,474.4 458.7,472.5" fill="#ffa800"/>
<polygon points="461.7,462.9 465.7,462.9 465.7,477.0 461.7,474.4" fill="#ffd000"/>
<polygon points="465.7,462.9 472.7,462.9 472.7,480.0 466.7,477.6 465.7,477.0" fill="#ffff00"/>
<polygon points="472.7,462.9 478.7,462.9 478.7,482.5 472.7,480.0" fill="#80f000"/>
<polygon points="478.7,462.9 483.7,462.9 483.7,484.5 478.7,482.5" fill="#00e800"/>
<polygon points="483.7,462.9 489.7,462.9 489.7,486.9 489.5,486.9 483.7,484.5" fill="#00f080"/>
<polygon points="489.7,462.9 499.7,462.9 499.7,489.4 489.7,486.9" fill="#00ffff"/>
<polygon points="499.7,462.9 510.7,462.9 510.7,492.0 499.7,489.4" fill="#00a8ff"/>
<polygon points="510.7,462.9 528.7,462.9 528.7,493.7 515.7,493.2 510.7,492.0" fill="#0050f0"/>
<polygon points="528.7,462.9 553.7,462.9 553.7,493.7 541.0,494.2 528.7,493.7" fill="#0000e8"/>
<polygon points="553.7,462.9 571.7,462.9 571.7,491.9 566.4,493.2 553.7,493.7" fill="#0050f0"/>
<polygon points="571.7,462.9 582.7,462.9 582.7,489.3 571.7,491.9" fill="#00a8ff"/>
<polygon points="582.7,462.9 592.7,462.9 592.7,486.9 592.6,486.9 582.7,489.3" fill="#00ffff"/>
<polygon points="592.7,462.9 598.7,462.9 598.7,484.4 592.7,486.9" fill="#00f080"/>
<polygon points="598.7,462.9 603.7,462.9 603.7,482.4 598.7,484.4" fill="#00e800"/>
<polygon points="603.7,462.9 609.7,462.9 609.7,479.9 603.7,482.4" fill="#80f000"/>
<polygon points="609.7,462.9 616.7,462.9 616.7,476.8 615.4,477.6 609.7,479.9" fill="#ffff00"/>
<polygon points="616.7,462.9 619.7,462.9 619.7,474.9 616.7,476.8" fill="#ffd000"/>
<polygon points="619.7,462.9 623.7,462.9 623.7,472.4 619.7,474.9" fill="#ffa800"/>
<polygon points="623.7,462.9 627.7,462.9 627.7,469.9 623.7,472.4" fill="#ff8000"/>
<polygon points="627.7,462.9 629.7,462.9 629.7,468.6 627.7,469.9" fill="#ff4800"/>
<polygon points="629.7,462.9 633.7,462.9 633.7,466.1 629.7,468.6" fill="#ff0000"/>
<polygon points="633.7,462.9 637.5,462.9 637.5,462.9 634.0,465.9 633.7,466.1" fill="#e00078"/>
<line x1="452.7" y1="463.9" x2="452.7" y2="468.3" stroke="#fff" stroke-opacity="0.22" stroke-width="0.7"/>
<line x1="460.8" y1="463.9" x2="460.8" y2="473.4" stroke="#fff" stroke-opacity="0.22" stroke-width="0.7"/>
<line x1="468.8" y1="463.9" x2="468.8" y2="478.0" stroke="#fff" stroke-opacity="0.22" stroke-width="0.7"/>
<line x1="476.8" y1="463.9" x2="476.8" y2="481.2" stroke="#fff" stroke-opacity="0.22" stroke-width="0.7"/>
<line x1="484.9" y1="463.9" x2="484.9" y2="484.5" stroke="#fff" stroke-opacity="0.22" stroke-width="0.7"/>
<line x1="492.9" y1="463.9" x2="492.9" y2="487.2" stroke="#fff" stroke-opacity="0.22" stroke-width="0.7"/>
<line x1="500.9" y1="463.9" x2="500.9" y2="489.2" stroke="#fff" stroke-opacity="0.22" stroke-width="0.7"/>
<line x1="509.0" y1="463.9" x2="509.0" y2="491.1" stroke="#fff" stroke-opacity="0.22" stroke-width="0.7"/>
<line x1="517.0" y1="463.9" x2="517.0" y2="492.8" stroke="#fff" stroke-opacity="0.22" stroke-width="0.7"/>
<line x1="525.1" y1="463.9" x2="525.1" y2="493.1" stroke="#fff" stroke-opacity="0.22" stroke-width="0.7"/>
<line x1="533.1" y1="463.9" x2="533.1" y2="493.4" stroke="#fff" stroke-opacity="0.22" stroke-width="0.7"/>
<line x1="541.1" y1="463.9" x2="541.1" y2="493.7" stroke="#fff" stroke-opacity="0.22" stroke-width="0.7"/>
<line x1="549.2" y1="463.9" x2="549.2" y2="493.4" stroke="#fff" stroke-opacity="0.22" stroke-width="0.7"/>
<line x1="557.2" y1="463.9" x2="557.2" y2="493.1" stroke="#fff" stroke-opacity="0.22" stroke-width="0.7"/>
<line x1="565.2" y1="463.9" x2="565.2" y2="492.7" stroke="#fff" stroke-opacity="0.22" stroke-width="0.7"/>
<line x1="573.3" y1="463.9" x2="573.3" y2="491.0" stroke="#fff" stroke-opacity="0.22" stroke-width="0.7"/>
<line x1="581.3" y1="463.9" x2="581.3" y2="489.1" stroke="#fff" stroke-opacity="0.22" stroke-width="0.7"/>
<line x1="589.3" y1="463.9" x2="589.3" y2="487.2" stroke="#fff" stroke-opacity="0.22" stroke-width="0.7"/>
<line x1="597.4" y1="463.9" x2="597.4" y2="484.5" stroke="#fff" stroke-opacity="0.22" stroke-width="0.7"/>
<line x1="605.4" y1="463.9" x2="605.4" y2="481.2" stroke="#fff" stroke-opacity="0.22" stroke-width="0.7"/>
<line x1="613.4" y1="463.9" x2="613.4" y2="477.9" stroke="#fff" stroke-opacity="0.22" stroke-width="0.7"/>
<line x1="621.5" y1="463.9" x2="621.5" y2="473.3" stroke="#fff" stroke-opacity="0.22" stroke-width="0.7"/>
<line x1="629.5" y1="463.9" x2="629.5" y2="468.2" stroke="#fff" stroke-opacity="0.22" stroke-width="0.7"/>
<polyline points="444.7,463.2 448.2,466.2 466.7,477.9 489.5,487.2 515.7,493.5 541.0,494.5 566.4,493.5 592.6,487.2 615.4,477.9 634.0,466.2 637.5,463.2" fill="none" stroke="#1616b4" stroke-width="1.6" stroke-linejoin="round"/>
<line x1="59.0" y1="462.9" x2="637.5" y2="462.9" stroke="#96105e" stroke-width="2.2"/>
<path d="M58.5 463.9L48.0 478.4H68.0ZM58.5 463.9V478.4" fill="none" stroke="#5cd95c" stroke-width="1.1"/>
<circle cx="59.0" cy="462.9" r="3.7" fill="#22d822"/>
<path d="M251.3 463.9L240.8 478.4H260.9ZM251.3 463.9V478.4" fill="none" stroke="#5cd95c" stroke-width="1.1"/>
<circle cx="251.8" cy="462.9" r="3.7" fill="#22d822"/>
<path d="M444.2 463.9L433.7 478.4H453.7ZM444.2 463.9V478.4" fill="none" stroke="#5cd95c" stroke-width="1.1"/>
<circle cx="444.7" cy="462.9" r="3.7" fill="#22d822"/>
<path d="M637.0 463.9L626.5 478.4H646.5ZM637.0 463.9V478.4" fill="none" stroke="#5cd95c" stroke-width="1.1"/>
<circle cx="637.5" cy="462.9" r="3.7" fill="#22d822"/>
<circle cx="59.0" cy="462.9" r="1.3" fill="#111"/>
<circle cx="91.1" cy="462.9" r="1.3" fill="#111"/>
<circle cx="123.3" cy="462.9" r="1.3" fill="#111"/>
<circle cx="155.4" cy="462.9" r="1.3" fill="#111"/>
<circle cx="187.6" cy="462.9" r="1.3" fill="#111"/>
<circle cx="219.7" cy="462.9" r="1.3" fill="#111"/>
<circle cx="251.8" cy="462.9" r="1.3" fill="#111"/>
<circle cx="284.0" cy="462.9" r="1.3" fill="#111"/>
<circle cx="316.1" cy="462.9" r="1.3" fill="#111"/>
<circle cx="348.3" cy="462.9" r="1.3" fill="#111"/>
<circle cx="380.4" cy="462.9" r="1.3" fill="#111"/>
<circle cx="412.6" cy="462.9" r="1.3" fill="#111"/>
<circle cx="444.7" cy="462.9" r="1.3" fill="#111"/>
<circle cx="476.8" cy="462.9" r="1.3" fill="#111"/>
<circle cx="509.0" cy="462.9" r="1.3" fill="#111"/>
<circle cx="541.1" cy="462.9" r="1.3" fill="#111"/>
<circle cx="573.3" cy="462.9" r="1.3" fill="#111"/>
<circle cx="605.4" cy="462.9" r="1.3" fill="#111"/>
<circle cx="637.5" cy="462.9" r="1.3" fill="#111"/>
<circle cx="68.0" cy="462.6" r="1" fill="#e02020"/>
<circle cx="214.5" cy="462.6" r="1" fill="#e02020"/>
<circle cx="260.9" cy="462.6" r="1" fill="#e02020"/>
<circle cx="407.4" cy="462.6" r="1" fill="#e02020"/>
<circle cx="453.7" cy="462.6" r="1" fill="#e02020"/>
<circle cx="600.2" cy="462.6" r="1" fill="#e02020"/>
<path d="M59 461V441M56.3 445.5L59 440.5L61.7 445.5" fill="none" stroke="#39d3e6" stroke-width="1.2"/>
<path d="M60 462.3H84M80 460L84.5 462.3L80 464.6" fill="none" stroke="#39d3e6" stroke-width="1.2"/>
<text x="54.2" y="432.5" font-family="Liberation Sans,sans-serif" font-size="10" fill="#39d3e6">Z</text>
<text x="50.2" y="460.2" class="lbl" textLength="24.8" lengthAdjust="spacingAndGlyphs" >F11-1</text>
<text x="67.2" y="460.2" class="lbl" textLength="24.8" lengthAdjust="spacingAndGlyphs" >F11-2</text>
<text x="80.2" y="460.2" class="lbl" textLength="24.8" lengthAdjust="spacingAndGlyphs" >F11-3</text>
<text x="94.8" y="460.2" class="lbl" textLength="24.8" lengthAdjust="spacingAndGlyphs" >F11-4</text>
<text x="126.8" y="460.2" class="lbl" textLength="24.8" lengthAdjust="spacingAndGlyphs" >F11-5</text>
<text x="158.6" y="460.2" class="lbl" textLength="24.8" lengthAdjust="spacingAndGlyphs" >F11-6</text>
<text x="188.8" y="460.2" class="lbl" textLength="24.8" lengthAdjust="spacingAndGlyphs" >F11-7</text>
<text x="205.8" y="460.2" class="lbl" textLength="24.8" lengthAdjust="spacingAndGlyphs" >F11-8</text>
<text x="218.8" y="460.2" class="lbl" textLength="24.8" lengthAdjust="spacingAndGlyphs" >F11-9</text>
<text x="231.6" y="460.2" class="lbl" textLength="30.4" lengthAdjust="spacingAndGlyphs" >F11-10</text>
<text x="243.0" y="460.2" class="lbl" textLength="24.8" lengthAdjust="spacingAndGlyphs" >F12-1</text>
<text x="260.1" y="460.2" class="lbl" textLength="24.8" lengthAdjust="spacingAndGlyphs" >F12-2</text>
<text x="273.1" y="460.2" class="lbl" textLength="24.8" lengthAdjust="spacingAndGlyphs" >F12-3</text>
<text x="287.6" y="460.2" class="lbl" textLength="24.8" lengthAdjust="spacingAndGlyphs" >F12-4</text>
<text x="319.6" y="460.2" class="lbl" textLength="24.8" lengthAdjust="spacingAndGlyphs" >F12-5</text>
<text x="351.4" y="460.2" class="lbl" textLength="24.8" lengthAdjust="spacingAndGlyphs" >F12-6</text>
<text x="381.6" y="460.2" class="lbl" textLength="24.8" lengthAdjust="spacingAndGlyphs" >F12-7</text>
<text x="398.6" y="460.2" class="lbl" textLength="24.8" lengthAdjust="spacingAndGlyphs" >F12-8</text>
<text x="411.6" y="460.2" class="lbl" textLength="24.8" lengthAdjust="spacingAndGlyphs" >F12-9</text>
<text x="424.4" y="460.2" class="lbl" textLength="30.4" lengthAdjust="spacingAndGlyphs" >F12-10</text>
<text x="435.9" y="460.2" class="lbl" textLength="24.8" lengthAdjust="spacingAndGlyphs" >F13-1</text>
<text x="452.9" y="460.2" class="lbl" textLength="24.8" lengthAdjust="spacingAndGlyphs" >F13-2</text>
<text x="465.9" y="460.2" class="lbl" textLength="24.8" lengthAdjust="spacingAndGlyphs" >F13-3</text>
<text x="480.5" y="460.2" class="lbl" textLength="24.8" lengthAdjust="spacingAndGlyphs" >F13-4</text>
<text x="512.5" y="460.2" class="lbl" textLength="24.8" lengthAdjust="spacingAndGlyphs" >F13-5</text>
<text x="544.3" y="460.2" class="lbl" textLength="24.8" lengthAdjust="spacingAndGlyphs" >F13-6</text>
<text x="574.5" y="460.2" class="lbl" textLength="24.8" lengthAdjust="spacingAndGlyphs" >F13-7</text>
<text x="591.5" y="460.2" class="lbl" textLength="24.8" lengthAdjust="spacingAndGlyphs" >F13-8</text>
<text x="604.5" y="460.2" class="lbl" textLength="24.8" lengthAdjust="spacingAndGlyphs" >F13-9</text>
<text x="617.3" y="460.2" class="lbl" textLength="30.4" lengthAdjust="spacingAndGlyphs" >F13-10</text>
</svg>
<svg style="left:0;top:0" width="1366" height="733" viewBox="0 0 1366 733">
<polygon points="781.0,339.8 781.8,339.6 799.0,335.3 800.0,334.7 805.0,331.5 824.5,319.2 853.5,310.6 896.7,297.9 934.2,286.8 962.2,278.6 967.2,277.9 996.0,274.0 996.3,273.9 1013.1,269.4 1019.3,261.4 1021.8,260.7 1044.7,253.9 1065.4,247.8 1084.1,242.3 1090.1,240.5 1101.2,239.5 1113.9,238.4 1116.9,237.5 1122.0,236.0 1123.4,229.7 1131.3,227.4 1144.5,223.5 1156.8,219.9 1166.3,217.1 1168.1,216.9 1178.7,215.6 1186.0,214.7 1188.6,214.7 1197.6,214.7 1197.6,221.7 1188.6,225.1 1186.0,226.0 1178.7,228.5 1168.1,232.2 1166.3,232.8 1156.8,236.1 1144.5,240.4 1131.3,244.9 1123.4,247.7 1122.0,248.1 1116.9,249.9 1113.9,250.9 1101.2,255.3 1090.1,259.2 1084.1,261.2 1065.4,267.7 1044.7,274.9 1021.8,282.8 1019.3,283.7 1013.1,285.8 996.3,291.6 996.0,291.7 967.2,301.5 962.2,303.2 934.2,312.7 896.7,325.4 853.5,339.9 824.5,349.8 805.0,356.5 800.0,349.8 799.0,349.8 781.8,350.6 781.0,350.6" fill="#e39a9a" stroke="none" stroke-width="1.00" stroke-linejoin="round" />
<polygon points="781.0,339.8 781.8,339.6 799.0,335.3 800.0,334.7 805.0,331.5 824.5,319.2 853.5,310.6 896.7,297.9 934.2,286.8 962.2,278.6 967.2,277.9 996.0,274.0 996.3,273.9 1013.1,269.4 1019.3,261.4 1021.8,260.7 1044.7,253.9 1065.4,247.8 1084.1,242.3 1090.1,240.5 1101.2,239.5 1113.9,238.4 1116.9,237.5 1122.0,236.0 1123.4,229.7 1131.3,227.4 1144.5,223.5 1156.8,219.9 1166.3,217.1 1168.1,216.9 1178.7,215.6 1186.0,214.7 1188.6,214.7 1197.6,214.7 1197.6,216.2 1188.6,216.9 1186.0,217.1 1178.7,218.3 1168.1,220.1 1166.3,220.4 1156.8,223.3 1144.5,227.0 1131.3,231.1 1123.4,233.5 1122.0,238.5 1116.9,240.1 1113.9,241.0 1101.2,242.8 1090.1,244.4 1084.1,246.2 1065.4,252.0 1044.7,258.3 1021.8,265.3 1019.3,266.1 1013.1,272.8 996.3,277.6 996.0,277.7 967.2,282.9 962.2,283.8 934.2,292.3 896.7,303.7 853.5,316.8 824.5,325.6 805.0,336.8 800.0,337.8 799.0,338.4 781.8,341.9 781.0,342.1" fill="#e28ca8" stroke="none" stroke-width="1.00" stroke-linejoin="round" />
<polygon points="781.0,342.1 781.8,341.9 799.0,338.4 800.0,337.8 805.0,336.8 824.5,325.6 853.5,316.8 896.7,303.7 934.2,292.3 962.2,283.8 967.2,282.9 996.0,277.7 996.3,277.6 1013.1,272.8 1019.3,266.1 1021.8,265.3 1044.7,258.3 1065.4,252.0 1084.1,246.2 1090.1,244.4 1101.2,242.8 1113.9,241.0 1116.9,240.1 1122.0,238.5 1123.4,233.5 1131.3,231.1 1144.5,227.0 1156.8,223.3 1166.3,220.4 1168.1,220.1 1178.7,218.3 1186.0,217.1 1188.6,216.9 1197.6,216.2 1197.6,217.4 1188.6,218.7 1186.0,219.0 1178.7,220.5 1168.1,222.7 1166.3,223.1 1156.8,226.1 1144.5,229.9 1131.3,234.1 1123.4,236.5 1122.0,240.6 1116.9,242.2 1113.9,243.2 1101.2,245.5 1090.1,247.6 1084.1,249.5 1065.4,255.4 1044.7,261.9 1021.8,269.1 1019.3,269.9 1013.1,275.6 996.3,280.7 996.0,280.7 967.2,286.9 962.2,288.0 934.2,296.7 896.7,308.3 853.5,321.8 824.5,330.8 805.0,341.0 800.0,340.4 799.0,340.8 781.8,343.8 781.0,343.9" fill="#de5648" stroke="none" stroke-width="1.00" stroke-linejoin="round" />
<polygon points="781.0,343.9 781.8,343.8 799.0,340.8 800.0,340.4 805.0,341.0 824.5,330.8 853.5,321.8 896.7,308.3 934.2,296.7 962.2,288.0 967.2,286.9 996.0,280.7 996.3,280.7 1013.1,275.6 1019.3,269.9 1021.8,269.1 1044.7,261.9 1065.4,255.4 1084.1,249.5 1090.1,247.6 1101.2,245.5 1113.9,243.2 1116.9,242.2 1122.0,240.6 1123.4,236.5 1131.3,234.1 1144.5,229.9 1156.8,226.1 1166.3,223.1 1168.1,222.7 1178.7,220.5 1186.0,219.0 1188.6,218.7 1197.6,217.4 1197.6,218.5 1188.6,220.3 1186.0,220.8 1178.7,222.6 1168.1,225.1 1166.3,225.6 1156.8,228.7 1144.5,232.6 1131.3,236.9 1123.4,239.4 1122.0,242.6 1116.9,244.2 1113.9,245.2 1101.2,248.1 1090.1,250.6 1084.1,252.5 1065.4,258.6 1044.7,265.2 1021.8,272.6 1019.3,273.4 1013.1,278.3 996.3,283.5 996.0,283.6 967.2,290.7 962.2,291.9 934.2,300.8 896.7,312.7 853.5,326.5 824.5,335.7 805.0,345.0 800.0,342.8 799.0,343.2 781.8,345.5 781.0,345.6" fill="#e88c82" stroke="none" stroke-width="1.00" stroke-linejoin="round" />
<polygon points="781.0,345.6 781.8,345.5 799.0,343.2 800.0,342.8 805.0,345.0 824.5,335.7 853.5,326.5 896.7,312.7 934.2,300.8 962.2,291.9 967.2,290.7 996.0,283.6 996.3,283.5 1013.1,278.3 1019.3,273.4 1021.8,272.6 1044.7,265.2 1065.4,258.6 1084.1,252.5 1090.1,250.6 1101.2,248.1 1113.9,245.2 1116.9,244.2 1122.0,242.6 1123.4,239.4 1131.3,236.9 1144.5,232.6 1156.8,228.7 1166.3,225.6 1168.1,225.1 1178.7,222.6 1186.0,220.8 1188.6,220.3 1197.6,218.5 1197.6,220.4 1188.6,223.1 1186.0,223.9 1178.7,226.1 1168.1,229.3 1166.3,229.8 1156.8,233.0 1144.5,237.2 1131.3,241.6 1123.4,244.2 1122.0,245.8 1116.9,247.6 1113.9,248.6 1101.2,252.3 1090.1,255.6 1084.1,257.6 1065.4,263.9 1044.7,270.9 1021.8,278.6 1019.3,279.4 1013.1,282.7 996.3,288.3 996.0,288.4 967.2,297.0 962.2,298.5 934.2,307.8 896.7,320.2 853.5,334.4 824.5,344.0 805.0,351.8 800.0,346.9 799.0,347.1 781.8,348.5 781.0,348.5" fill="#d94c46" stroke="none" stroke-width="1.00" stroke-linejoin="round" />
<polygon points="781.0,348.5 781.8,348.5 799.0,347.1 800.0,346.9 805.0,351.8 824.5,344.0 853.5,334.4 896.7,320.2 934.2,307.8 962.2,298.5 967.2,297.0 996.0,288.4 996.3,288.3 1013.1,282.7 1019.3,279.4 1021.8,278.6 1044.7,270.9 1065.4,263.9 1084.1,257.6 1090.1,255.6 1101.2,252.3 1113.9,248.6 1116.9,247.6 1122.0,245.8 1123.4,244.2 1131.3,241.6 1144.5,237.2 1156.8,233.0 1166.3,229.8 1168.1,229.3 1178.7,226.1 1186.0,223.9 1188.6,223.1 1197.6,220.4 1197.6,221.7 1188.6,225.1 1186.0,226.0 1178.7,228.5 1168.1,232.2 1166.3,232.8 1156.8,236.1 1144.5,240.4 1131.3,244.9 1123.4,247.7 1122.0,248.1 1116.9,249.9 1113.9,250.9 1101.2,255.3 1090.1,259.2 1084.1,261.2 1065.4,267.7 1044.7,274.9 1021.8,282.8 1019.3,283.7 1013.1,285.8 996.3,291.6 996.0,291.7 967.2,301.5 962.2,303.2 934.2,312.7 896.7,325.4 853.5,339.9 824.5,349.8 805.0,356.5 800.0,349.8 799.0,349.8 781.8,350.6 781.0,350.6" fill="#ee9f8c" stroke="none" stroke-width="1.00" stroke-linejoin="round" />
<polyline points="781.0,339.8 781.8,339.6 799.0,335.3 800.0,334.7 805.0,331.5 824.5,319.2 853.5,310.6 896.7,297.9 934.2,286.8 962.2,278.6 967.2,277.9 996.0,274.0 996.3,273.9 1013.1,269.4 1019.3,261.4 1021.8,260.7 1044.7,253.9 1065.4,247.8 1084.1,242.3 1090.1,240.5 1101.2,239.5 1113.9,238.4 1116.9,237.5 1122.0,236.0 1123.4,229.7 1131.3,227.4 1144.5,223.5 1156.8,219.9 1166.3,217.1 1168.1,216.9 1178.7,215.6 1186.0,214.7 1188.6,214.7 1197.6,214.7" fill="none" stroke="#3a1fc4" stroke-width="1.10" stroke-linejoin="round" />
<polyline points="781.0,342.1 781.8,341.9 799.0,338.4 800.0,337.8 805.0,336.8 824.5,325.6 853.5,316.8 896.7,303.7 934.2,292.3 962.2,283.8 967.2,282.9 996.0,277.7 996.3,277.6 1013.1,272.8 1019.3,266.1 1021.8,265.3 1044.7,258.3 1065.4,252.0 1084.1,246.2 1090.1,244.4 1101.2,242.8 1113.9,241.0 1116.9,240.1 1122.0,238.5 1123.4,233.5 1131.3,231.1 1144.5,227.0 1156.8,223.3 1166.3,220.4 1168.1,220.1 1178.7,218.3 1186.0,217.1 1188.6,216.9 1197.6,216.2" fill="none" stroke="#3a1fc4" stroke-width="1.00" stroke-linejoin="round" />
<polyline points="781.0,343.9 781.8,343.8 799.0,340.8 800.0,340.4 805.0,341.0 824.5,330.8 853.5,321.8 896.7,308.3 934.2,296.7 962.2,288.0 967.2,286.9 996.0,280.7 996.3,280.7 1013.1,275.6 1019.3,269.9 1021.8,269.1 1044.7,261.9 1065.4,255.4 1084.1,249.5 1090.1,247.6 1101.2,245.5 1113.9,243.2 1116.9,242.2 1122.0,240.6 1123.4,236.5 1131.3,234.1 1144.5,229.9 1156.8,226.1 1166.3,223.1 1168.1,222.7 1178.7,220.5 1186.0,219.0 1188.6,218.7 1197.6,217.4" fill="none" stroke="#3a1fc4" stroke-width="0.50" stroke-linejoin="round" />
<polyline points="781.0,345.6 781.8,345.5 799.0,343.2 800.0,342.8 805.0,345.0 824.5,335.7 853.5,326.5 896.7,312.7 934.2,300.8 962.2,291.9 967.2,290.7 996.0,283.6 996.3,283.5 1013.1,278.3 1019.3,273.4 1021.8,272.6 1044.7,265.2 1065.4,258.6 1084.1,252.5 1090.1,250.6 1101.2,248.1 1113.9,245.2 1116.9,244.2 1122.0,242.6 1123.4,239.4 1131.3,236.9 1144.5,232.6 1156.8,228.7 1166.3,225.6 1168.1,225.1 1178.7,222.6 1186.0,220.8 1188.6,220.3 1197.6,218.5" fill="none" stroke="#3a1fc4" stroke-width="0.90" stroke-linejoin="round" />
<polyline points="781.0,348.5 781.8,348.5 799.0,347.1 800.0,346.9 805.0,351.8 824.5,344.0 853.5,334.4 896.7,320.2 934.2,307.8 962.2,298.5 967.2,297.0 996.0,288.4 996.3,288.3 1013.1,282.7 1019.3,279.4 1021.8,278.6 1044.7,270.9 1065.4,263.9 1084.1,257.6 1090.1,255.6 1101.2,252.3 1113.9,248.6 1116.9,247.6 1122.0,245.8 1123.4,244.2 1131.3,241.6 1144.5,237.2 1156.8,233.0 1166.3,229.8 1168.1,229.3 1178.7,226.1 1186.0,223.9 1188.6,223.1 1197.6,220.4" fill="none" stroke="#3a1fc4" stroke-width="0.90" stroke-linejoin="round" />
<polyline points="781.0,350.6 781.8,350.6 799.0,349.8 800.0,349.8 805.0,356.5 824.5,349.8 853.5,339.9 896.7,325.4 934.2,312.7 962.2,303.2 967.2,301.5 996.0,291.7 996.3,291.6 1013.1,285.8 1019.3,283.7 1021.8,282.8 1044.7,274.9 1065.4,267.7 1084.1,261.2 1090.1,259.2 1101.2,255.3 1113.9,250.9 1116.9,249.9 1122.0,248.1 1123.4,247.7 1131.3,244.9 1144.5,240.4 1156.8,236.1 1166.3,232.8 1168.1,232.2 1178.7,228.5 1186.0,226.0 1188.6,225.1 1197.6,221.7" fill="none" stroke="#3a1fc4" stroke-width="1.00" stroke-linejoin="round" />
<line x1="781.4" y1="339.7" x2="782.2" y2="350.6" stroke="#3a1fc4" stroke-width="0.90" />
<line x1="799.5" y1="335.0" x2="800.3" y2="349.8" stroke="#3a1fc4" stroke-width="0.90" />
<line x1="824.5" y1="319.2" x2="825.3" y2="349.8" stroke="#3a1fc4" stroke-width="0.90" />
<line x1="962.2" y1="278.6" x2="963.0" y2="303.2" stroke="#3a1fc4" stroke-width="0.90" />
<line x1="996.0" y1="274.0" x2="996.8" y2="291.7" stroke="#3a1fc4" stroke-width="0.90" />
<line x1="1013.1" y1="269.4" x2="1013.9" y2="285.8" stroke="#3a1fc4" stroke-width="0.90" />
<line x1="1019.3" y1="261.4" x2="1020.1" y2="283.7" stroke="#3a1fc4" stroke-width="0.90" />
<line x1="1090.1" y1="240.5" x2="1090.9" y2="259.2" stroke="#3a1fc4" stroke-width="0.90" />
<line x1="1113.9" y1="238.4" x2="1114.7" y2="250.9" stroke="#3a1fc4" stroke-width="0.90" />
<line x1="1122.7" y1="232.8" x2="1123.5" y2="247.9" stroke="#3a1fc4" stroke-width="0.90" />
<line x1="1166.3" y1="217.1" x2="1167.1" y2="232.8" stroke="#3a1fc4" stroke-width="0.90" />
<line x1="1186.0" y1="214.7" x2="1186.8" y2="226.0" stroke="#3a1fc4" stroke-width="0.90" />
<line x1="1197.8" y1="214.7" x2="1198.6" y2="221.7" stroke="#3a1fc4" stroke-width="0.90" />
<polygon points="800.2,370.9 854.9,351.0 897.1,335.7 933.9,322.4 966.2,310.6 994.9,300.2 1020.5,290.9 1043.4,282.6 1064.2,275.1 1083.0,268.2 1100.2,262.0 1115.9,256.3 1130.3,251.1 1143.6,246.3 1155.9,241.8 1167.3,237.7 1177.9,233.8 1187.8,230.2 1197.0,226.9 1197.0,232.0 1187.8,235.5 1177.9,239.3 1167.3,243.4 1155.9,247.7 1143.6,252.4 1130.3,257.5 1115.9,263.0 1100.2,269.0 1083.0,275.5 1064.2,282.7 1043.4,290.6 1020.5,299.4 994.9,309.2 966.2,320.1 933.9,332.5 897.1,346.5 854.9,362.6 800.2,383.5" fill="#9adfd0" stroke="none" stroke-width="1.00" stroke-linejoin="round" />
<polygon points="800.2,373.6 854.9,353.5 897.1,338.1 933.9,324.6 966.2,312.7 994.9,302.2 1020.5,292.8 1043.4,284.3 1064.2,276.7 1083.0,269.8 1100.2,263.5 1115.9,257.8 1130.3,252.5 1143.6,247.6 1155.9,243.1 1167.3,238.9 1177.9,235.0 1187.8,231.4 1197.0,228.0 1197.0,229.0 1187.8,232.5 1177.9,236.1 1167.3,240.1 1155.9,244.3 1143.6,248.9 1130.3,253.8 1115.9,259.1 1100.2,265.0 1083.0,271.3 1064.2,278.3 1043.4,286.0 1020.5,294.5 994.9,304.0 966.2,314.7 933.9,326.7 897.1,340.3 854.9,356.0 800.2,376.2" fill="#2a6fb0" stroke="none" stroke-width="1.00" stroke-linejoin="round" />
<polygon points="800.2,376.2 854.9,356.0 897.1,340.3 933.9,326.7 966.2,314.7 994.9,304.0 1020.5,294.5 1043.4,286.0 1064.2,278.3 1083.0,271.3 1100.2,265.0 1115.9,259.1 1130.3,253.8 1143.6,248.9 1155.9,244.3 1167.3,240.1 1177.9,236.1 1187.8,232.5 1197.0,229.0 1197.0,230.6 1187.8,234.1 1177.9,237.8 1167.3,241.8 1155.9,246.1 1143.6,250.7 1130.3,255.7 1115.9,261.2 1100.2,267.1 1083.0,273.5 1064.2,280.6 1043.4,288.4 1020.5,297.1 994.9,306.7 966.2,317.5 933.9,329.7 897.1,343.6 854.9,359.5 800.2,380.1" fill="#22b058" stroke="none" stroke-width="1.00" stroke-linejoin="round" />
<polyline points="806.0,368.8 854.9,351.0 897.1,335.7 933.9,322.4 966.2,310.6 994.9,300.2 1020.5,290.9 1043.4,282.6 1064.2,275.1 1083.0,268.2 1100.2,262.0 1115.9,256.3 1130.3,251.1 1143.6,246.3 1155.9,241.8 1167.3,237.7 1177.9,233.8 1187.8,230.2 1197.0,226.9" fill="none" stroke="#2a50cc" stroke-width="0.80" stroke-linejoin="round" />
<polyline points="806.0,381.3 854.9,362.6 897.1,346.5 933.9,332.5 966.2,320.1 994.9,309.2 1020.5,299.4 1043.4,290.6 1064.2,282.7 1083.0,275.5 1100.2,269.0 1115.9,263.0 1130.3,257.5 1143.6,252.4 1155.9,247.7 1167.3,243.4 1177.9,239.3 1187.8,235.5 1197.0,232.0" fill="none" stroke="#2a50cc" stroke-width="0.80" stroke-linejoin="round" />
<polyline points="806.0,371.5 854.9,353.5 897.1,338.1 933.9,324.6 966.2,312.7 994.9,302.2 1020.5,292.8 1043.4,284.3 1064.2,276.7 1083.0,269.8 1100.2,263.5 1115.9,257.8 1130.3,252.5 1143.6,247.6 1155.9,243.1 1167.3,238.9 1177.9,235.0 1187.8,231.4 1197.0,228.0" fill="none" stroke="#2a50cc" stroke-width="0.50" stroke-linejoin="round" />
<polyline points="806.0,378.1 854.9,359.7 897.1,343.8 933.9,329.9 966.2,317.7 994.9,306.9 1020.5,297.2 1043.4,288.6 1064.2,280.8 1083.0,273.7 1100.2,267.2 1115.9,261.3 1130.3,255.8 1143.6,250.8 1155.9,246.2 1167.3,241.9 1177.9,237.9 1187.8,234.2 1197.0,230.7" fill="none" stroke="#1a6a58" stroke-width="0.60" stroke-linejoin="round" />
<line x1="806.0" y1="372.3" x2="852.6" y2="333.0" stroke="#431fd2" stroke-width="6.80" stroke-linecap="square"/>
<line x1="806.0" y1="372.3" x2="852.6" y2="333.0" stroke="#8230e0" stroke-width="5.00" />
<line x1="806.0" y1="372.3" x2="852.6" y2="333.0" stroke="#b16cf4" stroke-width="1.75" />
<line x1="852.6" y1="333.0" x2="897.1" y2="338.8" stroke="#4120d3" stroke-width="6.45" stroke-linecap="square"/>
<line x1="852.6" y1="333.0" x2="897.1" y2="338.8" stroke="#7f30e0" stroke-width="4.65" />
<line x1="852.6" y1="333.0" x2="897.1" y2="338.8" stroke="#af6cf4" stroke-width="1.63" />
<line x1="897.1" y1="338.8" x2="933.4" y2="306.6" stroke="#3f20d5" stroke-width="6.14" stroke-linecap="square"/>
<line x1="897.1" y1="338.8" x2="933.4" y2="306.6" stroke="#7c30e0" stroke-width="4.34" />
<line x1="897.1" y1="338.8" x2="933.4" y2="306.6" stroke="#ac6bf3" stroke-width="1.52" />
<line x1="933.4" y1="306.6" x2="966.2" y2="313.3" stroke="#3c21d6" stroke-width="5.87" stroke-linecap="square"/>
<line x1="933.4" y1="306.6" x2="966.2" y2="313.3" stroke="#7930e0" stroke-width="4.07" />
<line x1="933.4" y1="306.6" x2="966.2" y2="313.3" stroke="#a96bf3" stroke-width="1.42" />
<line x1="966.2" y1="313.3" x2="995.6" y2="286.3" stroke="#3a21d7" stroke-width="5.63" stroke-linecap="square"/>
<line x1="966.2" y1="313.3" x2="995.6" y2="286.3" stroke="#7530e1" stroke-width="3.83" />
<line x1="966.2" y1="313.3" x2="995.6" y2="286.3" stroke="#a66af3" stroke-width="1.34" />
<line x1="995.6" y1="286.3" x2="1020.5" y2="293.3" stroke="#3822d9" stroke-width="5.42" stroke-linecap="square"/>
<line x1="995.6" y1="286.3" x2="1020.5" y2="293.3" stroke="#7230e1" stroke-width="3.62" />
<line x1="995.6" y1="286.3" x2="1020.5" y2="293.3" stroke="#a36af3" stroke-width="1.27" />
<line x1="1020.5" y1="293.3" x2="1044.0" y2="270.1" stroke="#3622da" stroke-width="5.23" stroke-linecap="square"/>
<line x1="1020.5" y1="293.3" x2="1044.0" y2="270.1" stroke="#6f30e1" stroke-width="3.43" />
<line x1="1020.5" y1="293.3" x2="1044.0" y2="270.1" stroke="#a069f2" stroke-width="1.20" />
<line x1="1044.0" y1="270.1" x2="1064.2" y2="277.2" stroke="#3423db" stroke-width="5.06" stroke-linecap="square"/>
<line x1="1044.0" y1="270.1" x2="1064.2" y2="277.2" stroke="#6c30e1" stroke-width="3.26" />
<line x1="1044.0" y1="270.1" x2="1064.2" y2="277.2" stroke="#9e69f2" stroke-width="1.14" />
<line x1="1064.2" y1="277.2" x2="1083.5" y2="256.9" stroke="#3323dc" stroke-width="4.90" stroke-linecap="square"/>
<line x1="1064.2" y1="277.2" x2="1083.5" y2="256.9" stroke="#6930e1" stroke-width="3.10" />
<line x1="1064.2" y1="277.2" x2="1083.5" y2="256.9" stroke="#9b69f2" stroke-width="1.09" />
<line x1="1083.5" y1="256.9" x2="1100.2" y2="264.0" stroke="#3123dd" stroke-width="4.76" stroke-linecap="square"/>
<line x1="1083.5" y1="256.9" x2="1100.2" y2="264.0" stroke="#6630e1" stroke-width="2.96" />
<line x1="1083.5" y1="256.9" x2="1100.2" y2="264.0" stroke="#9968f2" stroke-width="1.04" />
<line x1="1100.2" y1="264.0" x2="1116.3" y2="245.9" stroke="#2f24de" stroke-width="4.64" stroke-linecap="square"/>
<line x1="1100.2" y1="264.0" x2="1116.3" y2="245.9" stroke="#6430e1" stroke-width="2.84" />
<line x1="1100.2" y1="264.0" x2="1116.3" y2="245.9" stroke="#9768f1" stroke-width="0.99" />
<line x1="1116.3" y1="245.9" x2="1130.3" y2="252.9" stroke="#2e24df" stroke-width="4.52" stroke-linecap="square"/>
<line x1="1116.3" y1="245.9" x2="1130.3" y2="252.9" stroke="#6130e1" stroke-width="2.72" />
<line x1="1116.3" y1="245.9" x2="1130.3" y2="252.9" stroke="#9568f1" stroke-width="0.95" />
<line x1="1130.3" y1="252.9" x2="1144.0" y2="236.7" stroke="#2c24e0" stroke-width="4.41" stroke-linecap="square"/>
<line x1="1130.3" y1="252.9" x2="1144.0" y2="236.7" stroke="#5f30e2" stroke-width="2.61" />
<line x1="1130.3" y1="252.9" x2="1144.0" y2="236.7" stroke="#9367f1" stroke-width="0.91" />
<line x1="1144.0" y1="236.7" x2="1155.9" y2="243.4" stroke="#2b25e1" stroke-width="4.31" stroke-linecap="square"/>
<line x1="1144.0" y1="236.7" x2="1155.9" y2="243.4" stroke="#5d30e2" stroke-width="2.51" />
<line x1="1144.0" y1="236.7" x2="1155.9" y2="243.4" stroke="#9167f1" stroke-width="0.88" />
<line x1="1155.9" y1="243.4" x2="1167.7" y2="228.8" stroke="#2a25e2" stroke-width="4.22" stroke-linecap="square"/>
<line x1="1155.9" y1="243.4" x2="1167.7" y2="228.8" stroke="#5b30e2" stroke-width="2.42" />
<line x1="1155.9" y1="243.4" x2="1167.7" y2="228.8" stroke="#8f67f1" stroke-width="0.85" />
<line x1="1167.7" y1="228.8" x2="1177.9" y2="235.3" stroke="#2925e2" stroke-width="4.13" stroke-linecap="square"/>
<line x1="1167.7" y1="228.8" x2="1177.9" y2="235.3" stroke="#5930e2" stroke-width="2.33" />
<line x1="1167.7" y1="228.8" x2="1177.9" y2="235.3" stroke="#8e67f0" stroke-width="0.82" />
<line x1="1177.9" y1="235.3" x2="1188.2" y2="221.9" stroke="#2826e3" stroke-width="4.05" stroke-linecap="square"/>
<line x1="1177.9" y1="235.3" x2="1188.2" y2="221.9" stroke="#5730e2" stroke-width="2.25" />
<line x1="1177.9" y1="235.3" x2="1188.2" y2="221.9" stroke="#8c66f0" stroke-width="0.79" />
<line x1="1188.2" y1="221.9" x2="1197.0" y2="228.3" stroke="#2726e4" stroke-width="3.98" stroke-linecap="square"/>
<line x1="1188.2" y1="221.9" x2="1197.0" y2="228.3" stroke="#5630e2" stroke-width="2.18" />
<line x1="1188.2" y1="221.9" x2="1197.0" y2="228.3" stroke="#8b66f0" stroke-width="0.76" />
<line x1="802.3" y1="349.3" x2="806.0" y2="371.3" stroke="#431fd2" stroke-width="6.20" stroke-linecap="square"/>
<line x1="802.3" y1="349.3" x2="806.0" y2="371.3" stroke="#8330e0" stroke-width="4.40" />
<line x1="802.3" y1="349.3" x2="806.0" y2="371.3" stroke="#b26cf4" stroke-width="1.54" />
<line x1="852.6" y1="333.0" x2="854.9" y2="353.4" stroke="#421fd3" stroke-width="5.88" stroke-linecap="square"/>
<line x1="852.6" y1="333.0" x2="854.9" y2="353.4" stroke="#8130e0" stroke-width="4.08" />
<line x1="852.6" y1="333.0" x2="854.9" y2="353.4" stroke="#b06cf4" stroke-width="1.43" />
<line x1="895.8" y1="318.9" x2="897.1" y2="337.9" stroke="#4020d4" stroke-width="5.60" stroke-linecap="square"/>
<line x1="895.8" y1="318.9" x2="897.1" y2="337.9" stroke="#7e30e0" stroke-width="3.80" />
<line x1="895.8" y1="318.9" x2="897.1" y2="337.9" stroke="#ae6bf4" stroke-width="1.33" />
<circle cx="895.8" cy="319.4" r="1.1" fill="#1a1030"/>
<line x1="933.4" y1="306.6" x2="933.9" y2="324.4" stroke="#3e20d5" stroke-width="5.35" stroke-linecap="square"/>
<line x1="933.4" y1="306.6" x2="933.9" y2="324.4" stroke="#7a30e0" stroke-width="3.55" />
<line x1="933.4" y1="306.6" x2="933.9" y2="324.4" stroke="#ab6bf3" stroke-width="1.24" />
<line x1="966.4" y1="295.8" x2="966.2" y2="312.5" stroke="#3b21d7" stroke-width="5.14" stroke-linecap="square"/>
<line x1="966.4" y1="295.8" x2="966.2" y2="312.5" stroke="#7730e1" stroke-width="3.34" />
<line x1="966.4" y1="295.8" x2="966.2" y2="312.5" stroke="#a86af3" stroke-width="1.17" />
<circle cx="966.4" cy="296.3" r="1.0" fill="#1a1030"/>
<line x1="995.6" y1="286.3" x2="994.9" y2="302.0" stroke="#3921d8" stroke-width="4.95" stroke-linecap="square"/>
<line x1="995.6" y1="286.3" x2="994.9" y2="302.0" stroke="#7430e1" stroke-width="3.15" />
<line x1="995.6" y1="286.3" x2="994.9" y2="302.0" stroke="#a56af3" stroke-width="1.10" />
<line x1="1021.1" y1="277.7" x2="1020.5" y2="292.6" stroke="#3722d9" stroke-width="4.78" stroke-linecap="square"/>
<line x1="1021.1" y1="277.7" x2="1020.5" y2="292.6" stroke="#7030e1" stroke-width="2.98" />
<line x1="1021.1" y1="277.7" x2="1020.5" y2="292.6" stroke="#a26af2" stroke-width="1.04" />
<line x1="1044.0" y1="270.1" x2="1043.4" y2="284.2" stroke="#3522db" stroke-width="4.63" stroke-linecap="square"/>
<line x1="1044.0" y1="270.1" x2="1043.4" y2="284.2" stroke="#6d30e1" stroke-width="2.83" />
<line x1="1044.0" y1="270.1" x2="1043.4" y2="284.2" stroke="#9f69f2" stroke-width="0.99" />
<line x1="1064.8" y1="263.2" x2="1064.2" y2="276.6" stroke="#3323dc" stroke-width="4.49" stroke-linecap="square"/>
<line x1="1064.8" y1="263.2" x2="1064.2" y2="276.6" stroke="#6a30e1" stroke-width="2.69" />
<line x1="1064.8" y1="263.2" x2="1064.2" y2="276.6" stroke="#9d69f2" stroke-width="0.94" />
<circle cx="1064.8" cy="263.7" r="0.8" fill="#1a1030"/>
<line x1="1083.5" y1="256.9" x2="1083.0" y2="269.7" stroke="#3223dd" stroke-width="4.37" stroke-linecap="square"/>
<line x1="1083.5" y1="256.9" x2="1083.0" y2="269.7" stroke="#6830e1" stroke-width="2.57" />
<line x1="1083.5" y1="256.9" x2="1083.0" y2="269.7" stroke="#9a68f2" stroke-width="0.90" />
<line x1="1100.7" y1="251.1" x2="1100.2" y2="263.4" stroke="#3024de" stroke-width="4.25" stroke-linecap="square"/>
<line x1="1100.7" y1="251.1" x2="1100.2" y2="263.4" stroke="#6530e1" stroke-width="2.45" />
<line x1="1100.7" y1="251.1" x2="1100.2" y2="263.4" stroke="#9868f1" stroke-width="0.86" />
<circle cx="1100.7" cy="251.6" r="0.8" fill="#1a1030"/>
<line x1="1116.3" y1="245.9" x2="1115.9" y2="257.7" stroke="#2f24df" stroke-width="4.15" stroke-linecap="square"/>
<line x1="1116.3" y1="245.9" x2="1115.9" y2="257.7" stroke="#6330e1" stroke-width="2.35" />
<line x1="1116.3" y1="245.9" x2="1115.9" y2="257.7" stroke="#9668f1" stroke-width="0.82" />
<line x1="1130.7" y1="241.1" x2="1130.3" y2="252.4" stroke="#2d24e0" stroke-width="4.05" stroke-linecap="square"/>
<line x1="1130.7" y1="241.1" x2="1130.3" y2="252.4" stroke="#6030e2" stroke-width="2.25" />
<line x1="1130.7" y1="241.1" x2="1130.3" y2="252.4" stroke="#9467f1" stroke-width="0.79" />
<line x1="1144.0" y1="236.7" x2="1143.6" y2="247.5" stroke="#2c25e0" stroke-width="3.96" stroke-linecap="square"/>
<line x1="1144.0" y1="236.7" x2="1143.6" y2="247.5" stroke="#5e30e2" stroke-width="2.16" />
<line x1="1144.0" y1="236.7" x2="1143.6" y2="247.5" stroke="#9267f1" stroke-width="0.76" />
<line x1="1156.3" y1="232.6" x2="1155.9" y2="243.0" stroke="#2a25e1" stroke-width="3.88" stroke-linecap="square"/>
<line x1="1156.3" y1="232.6" x2="1155.9" y2="243.0" stroke="#5c30e2" stroke-width="2.08" />
<line x1="1156.3" y1="232.6" x2="1155.9" y2="243.0" stroke="#9067f1" stroke-width="0.73" />
<circle cx="1156.3" cy="233.1" r="0.8" fill="#1a1030"/>
<line x1="1167.7" y1="228.8" x2="1167.3" y2="238.8" stroke="#2925e2" stroke-width="3.81" stroke-linecap="square"/>
<line x1="1167.7" y1="228.8" x2="1167.3" y2="238.8" stroke="#5a30e2" stroke-width="2.01" />
<line x1="1167.7" y1="228.8" x2="1167.3" y2="238.8" stroke="#8e67f0" stroke-width="0.70" />
<line x1="1178.3" y1="225.2" x2="1177.9" y2="234.9" stroke="#2825e3" stroke-width="3.74" stroke-linecap="square"/>
<line x1="1178.3" y1="225.2" x2="1177.9" y2="234.9" stroke="#5830e2" stroke-width="1.94" />
<line x1="1178.3" y1="225.2" x2="1177.9" y2="234.9" stroke="#8d66f0" stroke-width="0.68" />
<circle cx="1178.3" cy="225.7" r="0.8" fill="#1a1030"/>
<line x1="1188.2" y1="221.9" x2="1187.8" y2="231.3" stroke="#2726e3" stroke-width="3.67" stroke-linecap="square"/>
<line x1="1188.2" y1="221.9" x2="1187.8" y2="231.3" stroke="#5730e2" stroke-width="1.87" />
<line x1="1188.2" y1="221.9" x2="1187.8" y2="231.3" stroke="#8b66f0" stroke-width="0.66" />
<line x1="1197.4" y1="218.8" x2="1197.0" y2="227.9" stroke="#2626e4" stroke-width="3.61" stroke-linecap="square"/>
<line x1="1197.4" y1="218.8" x2="1197.0" y2="227.9" stroke="#5530e2" stroke-width="1.81" />
<line x1="1197.4" y1="218.8" x2="1197.0" y2="227.9" stroke="#8a66f0" stroke-width="0.63" />
<line x1="808.5" y1="375.5" x2="793.5" y2="403.5" stroke="#35d435" stroke-width="1.00" />
<line x1="808.5" y1="375.5" x2="820.5" y2="400.0" stroke="#35d435" stroke-width="1.00" />
<line x1="808.5" y1="375.5" x2="822.0" y2="391.0" stroke="#35d435" stroke-width="1.00" />
<line x1="793.5" y1="403.5" x2="820.5" y2="400.0" stroke="#35d435" stroke-width="1.00" />
<line x1="820.5" y1="400.0" x2="822.0" y2="391.0" stroke="#35d435" stroke-width="1.00" />
<line x1="808.5" y1="375.5" x2="799.5" y2="394.0" stroke="#35d435" stroke-width="1.00" />
<line x1="799.5" y1="394.0" x2="793.5" y2="403.5" stroke="#35d435" stroke-width="1.00" />
<line x1="801.0" y1="351.0" x2="790.8" y2="370.0" stroke="#35d435" stroke-width="1.00" />
<line x1="801.0" y1="351.0" x2="809.2" y2="367.7" stroke="#35d435" stroke-width="1.00" />
<line x1="801.0" y1="351.0" x2="810.2" y2="361.5" stroke="#35d435" stroke-width="1.00" />
<line x1="790.8" y1="370.0" x2="809.2" y2="367.7" stroke="#35d435" stroke-width="1.00" />
<line x1="809.2" y1="367.7" x2="810.2" y2="361.5" stroke="#35d435" stroke-width="1.00" />
<line x1="801.0" y1="351.0" x2="794.9" y2="363.6" stroke="#35d435" stroke-width="1.00" />
<line x1="794.9" y1="363.6" x2="790.8" y2="370.0" stroke="#35d435" stroke-width="1.00" />
<line x1="1021.0" y1="295.0" x2="1010.8" y2="312.4" stroke="#35d435" stroke-width="1.00" />
<line x1="1021.0" y1="295.0" x2="1029.1" y2="310.3" stroke="#35d435" stroke-width="1.00" />
<line x1="1021.0" y1="295.0" x2="1030.1" y2="304.7" stroke="#35d435" stroke-width="1.00" />
<line x1="1010.8" y1="312.4" x2="1029.1" y2="310.3" stroke="#35d435" stroke-width="1.00" />
<line x1="1029.1" y1="310.3" x2="1030.1" y2="304.7" stroke="#35d435" stroke-width="1.00" />
<line x1="1021.0" y1="295.0" x2="1014.9" y2="306.5" stroke="#35d435" stroke-width="1.00" />
<line x1="1014.9" y1="306.5" x2="1010.8" y2="312.4" stroke="#35d435" stroke-width="1.00" />
<line x1="1021.1" y1="278.7" x2="1014.2" y2="290.6" stroke="#35d435" stroke-width="1.00" />
<line x1="1021.1" y1="278.7" x2="1026.6" y2="289.1" stroke="#35d435" stroke-width="1.00" />
<line x1="1021.1" y1="278.7" x2="1027.3" y2="285.3" stroke="#35d435" stroke-width="1.00" />
<line x1="1014.2" y1="290.6" x2="1026.6" y2="289.1" stroke="#35d435" stroke-width="1.00" />
<line x1="1026.6" y1="289.1" x2="1027.3" y2="285.3" stroke="#35d435" stroke-width="1.00" />
<line x1="1021.1" y1="278.7" x2="1017.0" y2="286.6" stroke="#35d435" stroke-width="1.00" />
<line x1="1017.0" y1="286.6" x2="1014.2" y2="290.6" stroke="#35d435" stroke-width="1.00" />
<line x1="1130.8" y1="254.2" x2="1123.1" y2="263.9" stroke="#35d435" stroke-width="1.00" />
<line x1="1130.8" y1="254.2" x2="1136.9" y2="262.7" stroke="#35d435" stroke-width="1.00" />
<line x1="1130.8" y1="254.2" x2="1137.7" y2="259.5" stroke="#35d435" stroke-width="1.00" />
<line x1="1123.1" y1="263.9" x2="1136.9" y2="262.7" stroke="#35d435" stroke-width="1.00" />
<line x1="1136.9" y1="262.7" x2="1137.7" y2="259.5" stroke="#35d435" stroke-width="1.00" />
<line x1="1130.8" y1="254.2" x2="1126.2" y2="260.6" stroke="#35d435" stroke-width="1.00" />
<line x1="1126.2" y1="260.6" x2="1123.1" y2="263.9" stroke="#35d435" stroke-width="1.00" />
<line x1="1131.2" y1="242.1" x2="1126.0" y2="248.7" stroke="#35d435" stroke-width="1.00" />
<line x1="1131.2" y1="242.1" x2="1135.4" y2="247.9" stroke="#35d435" stroke-width="1.00" />
<line x1="1131.2" y1="242.1" x2="1135.9" y2="245.8" stroke="#35d435" stroke-width="1.00" />
<line x1="1126.0" y1="248.7" x2="1135.4" y2="247.9" stroke="#35d435" stroke-width="1.00" />
<line x1="1135.4" y1="247.9" x2="1135.9" y2="245.8" stroke="#35d435" stroke-width="1.00" />
<line x1="1131.2" y1="242.1" x2="1128.1" y2="246.5" stroke="#35d435" stroke-width="1.00" />
<line x1="1128.1" y1="246.5" x2="1126.0" y2="248.7" stroke="#35d435" stroke-width="1.00" />
<line x1="1197.5" y1="229.3" x2="1191.3" y2="236.5" stroke="#35d435" stroke-width="1.00" />
<line x1="1197.5" y1="229.3" x2="1202.4" y2="235.6" stroke="#35d435" stroke-width="1.00" />
<line x1="1197.5" y1="229.3" x2="1203.1" y2="233.3" stroke="#35d435" stroke-width="1.00" />
<line x1="1191.3" y1="236.5" x2="1202.4" y2="235.6" stroke="#35d435" stroke-width="1.00" />
<line x1="1202.4" y1="235.6" x2="1203.1" y2="233.3" stroke="#35d435" stroke-width="1.00" />
<line x1="1197.5" y1="229.3" x2="1193.8" y2="234.0" stroke="#35d435" stroke-width="1.00" />
<line x1="1193.8" y1="234.0" x2="1191.3" y2="236.5" stroke="#35d435" stroke-width="1.00" />
<line x1="1201.4" y1="219.8" x2="1197.2" y2="224.7" stroke="#35d435" stroke-width="1.00" />
<line x1="1201.4" y1="219.8" x2="1204.7" y2="224.1" stroke="#35d435" stroke-width="1.00" />
<line x1="1201.4" y1="219.8" x2="1205.2" y2="222.5" stroke="#35d435" stroke-width="1.00" />
<line x1="1197.2" y1="224.7" x2="1204.7" y2="224.1" stroke="#35d435" stroke-width="1.00" />
<line x1="1204.7" y1="224.1" x2="1205.2" y2="222.5" stroke="#35d435" stroke-width="1.00" />
<line x1="1201.4" y1="219.8" x2="1198.9" y2="223.0" stroke="#35d435" stroke-width="1.00" />
<line x1="1198.9" y1="223.0" x2="1197.2" y2="224.7" stroke="#35d435" stroke-width="1.00" />
<polygon points="838.0,600.5 1191.2,335.2 1192.0,347.0 1188.3,349.8 1181.5,363.1 1142.8,395.6 1133.6,395.0 1126.8,397.5 1122.5,401.2 1115.3,416.8 1051.7,470.2 1033.0,471.6 1027.3,476.6 1021.6,483.0 1003.0,511.0 890.5,606.0 854.5,617.0 844.5,627.5 839.5,625.0 838.2,607.0" fill="#e28585" stroke="none" stroke-width="1.00" stroke-linejoin="round" />
<polygon points="838.5,599.2 1191.0,335.2 1191.0,337.3 838.5,603.4" fill="#eaa3ac" stroke="none" stroke-width="1.00" stroke-linejoin="round" />
<polygon points="838.5,603.4 1191.0,337.3 1191.0,339.5 838.5,607.8" fill="#c93650" stroke="none" stroke-width="1.00" stroke-linejoin="round" />
<polyline points="1186.9,347.2 1180.1,360.5 1141.4,393.0 1132.2,392.4 1125.4,394.9 1121.1,398.6 1113.9,414.2 1050.3,467.6 1031.6,469.0 1025.9,474.0 1020.2,480.4 1001.6,508.4 889.1,603.4 853.1,614.4" fill="none" stroke="#c93650" stroke-width="2.80" stroke-linejoin="round" />
<polyline points="838.0,600.5 1191.2,335.2 1192.0,347.0 1188.3,349.8 1181.5,363.1 1142.8,395.6 1133.6,395.0 1126.8,397.5 1122.5,401.2 1115.3,416.8 1051.7,470.2 1033.0,471.6 1027.3,476.6 1021.6,483.0 1003.0,511.0 890.5,606.0 854.5,617.0 844.5,627.5 839.5,625.0 838.2,607.0 838.0,600.5" fill="none" stroke="#3a1fc4" stroke-width="0.95" stroke-linejoin="round" />
<line x1="838.5" y1="603.4" x2="1191.0" y2="337.3" stroke="#3a1fc4" stroke-width="0.55" />
<line x1="838.5" y1="607.8" x2="1191.0" y2="339.5" stroke="#3a1fc4" stroke-width="0.60" />
<polyline points="1186.3,345.4 1179.5,358.7 1140.8,391.2 1131.6,390.6 1124.8,393.1 1120.5,396.8 1113.3,412.4 1049.7,465.8 1031.0,467.2 1025.3,472.2 1019.6,478.6 1001.0,506.6 888.5,601.6 852.5,612.6" fill="none" stroke="#3a1fc4" stroke-width="0.55" stroke-linejoin="round" />
<line x1="852.2" y1="589.4" x2="853.8" y2="615.7" stroke="#3a1fc4" stroke-width="1.00" />
<line x1="849.2" y1="589.1" x2="855.7" y2="593.9" stroke="#3a1fc4" stroke-width="0.80" />
<line x1="883.3" y1="566.1" x2="888.2" y2="604.6" stroke="#3a1fc4" stroke-width="1.00" />
<line x1="880.3" y1="565.8" x2="886.8" y2="570.6" stroke="#3a1fc4" stroke-width="0.80" />
<line x1="999.4" y1="479.2" x2="1001.6" y2="510.3" stroke="#3a1fc4" stroke-width="1.00" />
<line x1="996.4" y1="478.9" x2="1002.9" y2="483.7" stroke="#3a1fc4" stroke-width="0.80" />
<line x1="1018.7" y1="464.7" x2="1020.2" y2="482.3" stroke="#3a1fc4" stroke-width="1.00" />
<line x1="1015.7" y1="464.4" x2="1022.2" y2="469.2" stroke="#3a1fc4" stroke-width="0.80" />
<line x1="1026.6" y1="458.8" x2="1027.0" y2="475.9" stroke="#3a1fc4" stroke-width="1.00" />
<line x1="1023.6" y1="458.5" x2="1030.1" y2="463.3" stroke="#3a1fc4" stroke-width="0.80" />
<line x1="1033.0" y1="454.0" x2="1033.4" y2="471.6" stroke="#3a1fc4" stroke-width="1.00" />
<line x1="1030.0" y1="453.7" x2="1036.5" y2="458.5" stroke="#3a1fc4" stroke-width="0.80" />
<line x1="1049.6" y1="441.6" x2="1051.0" y2="470.2" stroke="#3a1fc4" stroke-width="1.00" />
<line x1="1046.6" y1="441.3" x2="1053.1" y2="446.1" stroke="#3a1fc4" stroke-width="0.80" />
<line x1="1112.2" y1="394.7" x2="1115.3" y2="416.8" stroke="#3a1fc4" stroke-width="1.00" />
<line x1="1109.2" y1="394.4" x2="1115.7" y2="399.2" stroke="#3a1fc4" stroke-width="0.80" />
<line x1="1122.5" y1="387.0" x2="1123.2" y2="400.0" stroke="#3a1fc4" stroke-width="1.00" />
<line x1="1119.5" y1="386.7" x2="1126.0" y2="391.5" stroke="#3a1fc4" stroke-width="0.80" />
<line x1="1130.5" y1="381.0" x2="1131.1" y2="395.6" stroke="#3a1fc4" stroke-width="1.00" />
<line x1="1127.5" y1="380.7" x2="1134.0" y2="385.5" stroke="#3a1fc4" stroke-width="0.80" />
<line x1="1140.4" y1="373.6" x2="1142.2" y2="395.0" stroke="#3a1fc4" stroke-width="1.00" />
<line x1="1137.4" y1="373.3" x2="1143.9" y2="378.1" stroke="#3a1fc4" stroke-width="0.80" />
<line x1="1180.3" y1="343.7" x2="1181.5" y2="362.5" stroke="#3a1fc4" stroke-width="1.00" />
<line x1="1177.3" y1="343.4" x2="1183.8" y2="348.2" stroke="#3a1fc4" stroke-width="0.80" />
<line x1="1188.3" y1="337.7" x2="1188.9" y2="348.3" stroke="#3a1fc4" stroke-width="1.00" />
<line x1="1185.3" y1="337.4" x2="1191.8" y2="342.2" stroke="#3a1fc4" stroke-width="0.80" />
<circle cx="879.3" cy="572.8" r="1.3" fill="#1a1020"/>
<circle cx="916.1" cy="545.3" r="1.3" fill="#1a1020"/>
<circle cx="948.8" cy="520.8" r="1.3" fill="#1a1020"/>
<circle cx="977.5" cy="499.3" r="1.3" fill="#1a1020"/>
<circle cx="1003.0" cy="480.2" r="1.3" fill="#1a1020"/>
<circle cx="1047.4" cy="446.9" r="1.3" fill="#1a1020"/>
<circle cx="1066.7" cy="432.5" r="1.3" fill="#1a1020"/>
<circle cx="1098.6" cy="408.6" r="1.3" fill="#1a1020"/>
<circle cx="1139.7" cy="377.8" r="1.3" fill="#1a1020"/>
<circle cx="1151.4" cy="369.0" r="1.3" fill="#1a1020"/>
<circle cx="1162.5" cy="360.7" r="1.3" fill="#1a1020"/>
<circle cx="1172.3" cy="353.4" r="1.3" fill="#1a1020"/>
<line x1="838.0" y1="607.0" x2="828.5" y2="634.0" stroke="#35d435" stroke-width="1.00" />
<line x1="838.0" y1="607.0" x2="850.6" y2="629.0" stroke="#35d435" stroke-width="1.00" />
<line x1="838.0" y1="607.0" x2="830.0" y2="619.5" stroke="#35d435" stroke-width="1.00" />
<line x1="838.0" y1="607.0" x2="846.0" y2="617.0" stroke="#35d435" stroke-width="1.00" />
<polyline points="828.5,634.0 850.6,629.0 846.0,617.0 830.0,619.5 828.5,634.0" fill="none" stroke="#35d435" stroke-width="0.90" stroke-linejoin="round" />
<line x1="1028.5" y1="470.0" x2="1023.1" y2="480.1" stroke="#35d435" stroke-width="1.00" />
<line x1="1028.5" y1="470.0" x2="1032.8" y2="478.8" stroke="#35d435" stroke-width="1.00" />
<line x1="1028.5" y1="470.0" x2="1033.4" y2="475.6" stroke="#35d435" stroke-width="1.00" />
<line x1="1023.1" y1="480.1" x2="1032.8" y2="478.8" stroke="#35d435" stroke-width="1.00" />
<line x1="1032.8" y1="478.8" x2="1033.4" y2="475.6" stroke="#35d435" stroke-width="1.00" />
<line x1="1028.5" y1="470.0" x2="1025.3" y2="476.7" stroke="#35d435" stroke-width="1.00" />
<line x1="1025.3" y1="476.7" x2="1023.1" y2="480.1" stroke="#35d435" stroke-width="1.00" />
<line x1="1130.0" y1="387.0" x2="1125.8" y2="394.8" stroke="#35d435" stroke-width="1.00" />
<line x1="1130.0" y1="387.0" x2="1133.4" y2="393.9" stroke="#35d435" stroke-width="1.00" />
<line x1="1130.0" y1="387.0" x2="1133.8" y2="391.3" stroke="#35d435" stroke-width="1.00" />
<line x1="1125.8" y1="394.8" x2="1133.4" y2="393.9" stroke="#35d435" stroke-width="1.00" />
<line x1="1133.4" y1="393.9" x2="1133.8" y2="391.3" stroke="#35d435" stroke-width="1.00" />
<line x1="1130.0" y1="387.0" x2="1127.5" y2="392.2" stroke="#35d435" stroke-width="1.00" />
<line x1="1127.5" y1="392.2" x2="1125.8" y2="394.8" stroke="#35d435" stroke-width="1.00" />
<line x1="1192.5" y1="338.0" x2="1188.9" y2="344.7" stroke="#35d435" stroke-width="1.00" />
<line x1="1192.5" y1="338.0" x2="1195.4" y2="343.9" stroke="#35d435" stroke-width="1.00" />
<line x1="1192.5" y1="338.0" x2="1195.7" y2="341.7" stroke="#35d435" stroke-width="1.00" />
<line x1="1188.9" y1="344.7" x2="1195.4" y2="343.9" stroke="#35d435" stroke-width="1.00" />
<line x1="1195.4" y1="343.9" x2="1195.7" y2="341.7" stroke="#35d435" stroke-width="1.00" />
<line x1="1192.5" y1="338.0" x2="1190.3" y2="342.4" stroke="#35d435" stroke-width="1.00" />
<line x1="1190.3" y1="342.4" x2="1188.9" y2="344.7" stroke="#35d435" stroke-width="1.00" />
<polygon points="829.0,592.0 838.0,588.5 845.5,592.0 845.5,603.5 837.0,607.0 829.0,603.0" fill="#d9f4ef" stroke="none" stroke-width="0.00" stroke-linejoin="round" opacity="0.8"/>
<polygon points="829.0,592.0 837.0,595.0 837.0,607.0 829.0,603.0" fill="#e8ea5a" stroke="none" stroke-width="0.00" stroke-linejoin="round" opacity="0.85"/>
<polygon points="837.0,595.0 845.5,592.0 845.5,603.5 837.0,607.0" fill="#7fe3ea" stroke="none" stroke-width="0.00" stroke-linejoin="round" opacity="0.85"/>
<line x1="838.0" y1="607.0" x2="832.6" y2="569.0" stroke="#35d0e2" stroke-width="1.30" />
<line x1="832.6" y1="569.0" x2="835.8" y2="573.6" stroke="#35d0e2" stroke-width="1.30" />
<line x1="832.6" y1="569.0" x2="830.8" y2="574.3" stroke="#35d0e2" stroke-width="1.30" />
<text x="826.5" y="566.0" font-family="Liberation Sans,sans-serif" font-size="9.5" fill="#35d0e2">Z</text>
<line x1="838.0" y1="607.0" x2="807.5" y2="591.5" stroke="#35d0e2" stroke-width="1.30" />
<line x1="807.5" y1="591.5" x2="813.1" y2="591.5" stroke="#35d0e2" stroke-width="1.30" />
<line x1="807.5" y1="591.5" x2="810.8" y2="596.0" stroke="#35d0e2" stroke-width="1.30" />
<text x="796.5" y="593.0" font-family="Liberation Sans,sans-serif" font-size="9.5" fill="#35d0e2">Y</text>
<line x1="838.0" y1="607.0" x2="871.0" y2="581.6" stroke="#35d0e2" stroke-width="1.30" />
<line x1="871.0" y1="581.6" x2="868.6" y2="586.6" stroke="#35d0e2" stroke-width="1.30" />
<line x1="871.0" y1="581.6" x2="865.5" y2="582.7" stroke="#35d0e2" stroke-width="1.30" />
<text x="873.5" y="581.0" font-family="Liberation Sans,sans-serif" font-size="9.5" fill="#35d0e2">X</text>
</svg>
</body></html>
